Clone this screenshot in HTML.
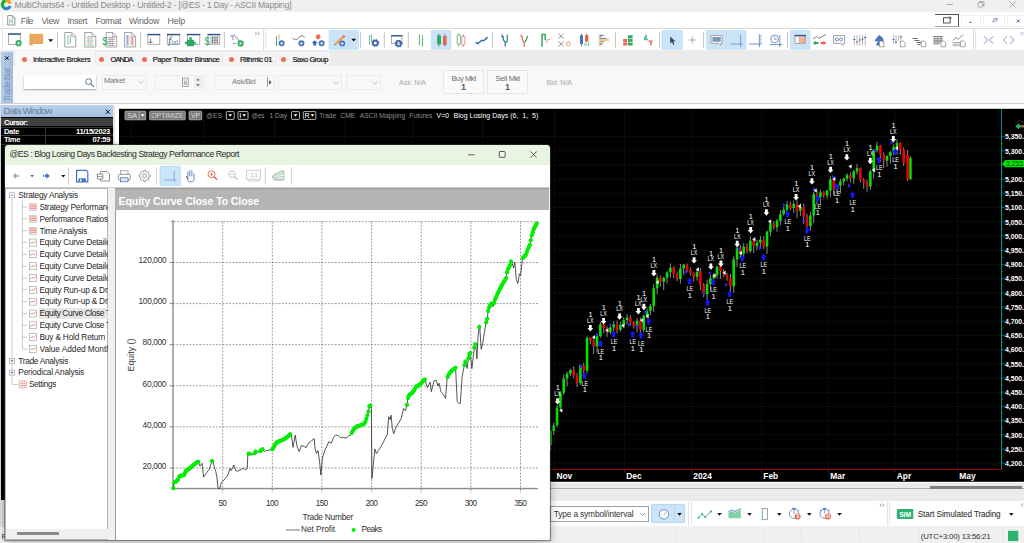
<!DOCTYPE html>
<html><head><meta charset="utf-8"><title>MultiCharts64</title><style>
html,body{margin:0;padding:0;overflow:hidden;}
body{width:1024px;height:543px;overflow:hidden;position:relative;background:#f0f0f0;font-family:"Liberation Sans",sans-serif;}
.a{position:absolute;}
.t{position:absolute;white-space:pre;font-family:"Liberation Sans",sans-serif;}
svg{overflow:hidden;display:block;}
</style></head><body>
<div class="a" style="left:0px;top:105px;width:113px;height:438px;background:#d9d9d9;"></div>
<div class="a" style="left:1px;top:105px;width:112px;height:12.3px;background:linear-gradient(#b8d0ec,#a5c1e3);"></div>
<span class="t" style="left:3.60px;top:105.20px;font-size:9.6px;line-height:12px;color:#6e7f96;letter-spacing:-0.826px;">Data Window</span>
<svg class="a" style="left:103.6px;top:107.7px;" width="8" height="8" viewBox="0 0 8 8"><path d="M1.800 1.800l4 4m0-4l-4 4" stroke="#111" stroke-width="1"/></svg>
<div class="a" style="left:1px;top:117.3px;width:111.6px;height:382.7px;background:#000;"></div>
<div class="a" style="left:1px;top:117.8px;width:111.6px;height:8.7px;background:#404040;"></div>
<span class="t" style="left:4.00px;top:118.20px;font-size:7.6px;line-height:10px;color:#fff;font-weight:bold;letter-spacing:-0.564px;">Cursor:</span>
<div class="a" style="left:1px;top:126.5px;width:111.6px;height:0.5px;background:#333;"></div>
<div class="a" style="left:1px;top:135px;width:111.6px;height:0.5px;background:#333;"></div>
<div class="a" style="left:1px;top:143.7px;width:111.6px;height:0.5px;background:#333;"></div>
<div class="a" style="left:45px;top:126.5px;width:0.6px;height:18px;background:#333;"></div>
<span class="t" style="left:4.00px;top:126.80px;font-size:7.6px;line-height:10px;color:#fff;font-weight:bold;letter-spacing:-0.368px;">Date</span>
<span class="t" style="left:76.00px;top:126.80px;font-size:7.6px;line-height:10px;color:#fff;font-weight:bold;letter-spacing:-0.361px;">11/15/2023</span>
<span class="t" style="left:4.00px;top:135.40px;font-size:7.6px;line-height:10px;color:#fff;font-weight:bold;letter-spacing:-0.400px;">Time</span>
<span class="t" style="left:92.50px;top:135.40px;font-size:7.6px;line-height:10px;color:#fff;font-weight:bold;letter-spacing:-0.387px;">07:59</span>
<div class="a" style="left:113px;top:481.7px;width:911px;height:7px;background:#e9e9e9;"></div>
<div class="a" style="left:113px;top:488.3px;width:911px;height:0.8px;background:#b0b0b0;"></div>
<div class="a" style="left:113px;top:489.1px;width:911px;height:11.7px;background:#ebebeb;"></div>
<div class="a" style="left:0px;top:500.7px;width:1024px;height:25.8px;background:#fdfdfd;"></div>
<div class="a" style="left:0px;top:500.7px;width:4.6px;height:25.8px;background:#dedede;"></div>
<div class="a" style="left:688.5px;top:500.7px;width:336px;height:25.8px;background:#ffffff;"></div>
<div class="a" style="left:0px;top:526.5px;width:1024px;height:16.5px;background:#f0f0f0;"></div>
<div class="a" style="left:930.4px;top:485.9px;width:92px;height:2.8px;background:#808080;"></div>
<svg class="a" style="left:0px;top:501px;" width="6" height="26" viewBox="0 0 6 26"><path d="M2.500 2v22" stroke="#aaa" stroke-width="0.8" stroke-dasharray="0.900 1.100"/></svg>
<div class="a" style="left:550.2px;top:506.4px;width:98.5px;height:15.2px;background:#ffffff;border:0.8px solid #a0a0a0;box-sizing:border-box;"></div>
<span class="t" style="left:553.80px;top:508.70px;font-size:8.4px;line-height:11px;color:#333;letter-spacing:-0.171px;">Type a symbol/interval</span>
<svg class="a" style="left:638px;top:510px;" width="9" height="9" viewBox="0 0 9 9"><path d="M2 3l2.500 2.500 2.500-2.500" fill="none" stroke="#777" stroke-width="0.700"/></svg>
<div class="a" style="left:651px;top:504.3px;width:34px;height:19px;background:#cce4f7;border:0.6px solid #b5d8f5;box-sizing:border-box;border-radius:1px;"></div>
<div class="a" style="left:674.3px;top:504.3px;width:0.6px;height:19px;background:#b5d8f5;"></div>
<svg class="a" style="left:540px;top:500px" width="484" height="43" viewBox="540 500 484 43"><circle cx="663.900" cy="514.300" r="4.700" fill="#fff" stroke="#3c66a8" stroke-width="0.700"/><path d="M663.800 514.500l2.500-2" stroke="#3c66a8" stroke-width="0.600"/><path d="M660.500 514.300h1" stroke="#3c66a8" stroke-width="0.500"/><path d="M677.2 513h4.600l-2.300 2.700z" fill="#111"/><path d="M688.500 501.500v24" stroke="#dcdcdc" stroke-width="0.800"/><path d="M691.300 503v21.500" stroke="#b0b0b0" stroke-width="0.800" stroke-dasharray="0.900 1.100"/><path d="M698.500 517.800l3.700-3.700 3 3 5.800-5.700" fill="none" stroke="#2eaa62" stroke-width="0.900"/><circle cx="698.500" cy="517.800" r="1" fill="#2eaa62"/><circle cx="702.200" cy="514.100" r="1" fill="#2eaa62"/><circle cx="705.200" cy="517.100" r="1" fill="#2eaa62"/><circle cx="711" cy="511.400" r="1" fill="#2eaa62"/><path d="M717.2 513h4.600l-2.300 2.700z" fill="#111"/><path d="M728.500 518.300v-5.500l3.500-1.500 3 1.500 5.800-3v8.500z" fill="#7fd0a3"/><path d="M728.500 511.800l3.500-1.800 3 1.500 5.800-2.800" fill="none" stroke="#3c66a8" stroke-width="0.800"/><path d="M747.2 513h4.600l-2.300 2.700z" fill="#111"/><path d="M762.300 508.600v11" stroke="#2eaa62" stroke-width="0.800"/><path d="M761.500 508.600h6v11h-6" fill="none" stroke="#777" stroke-width="0.700"/><path d="M777.0 513h4.600l-2.300 2.700z" fill="#111"/><circle cx="794" cy="513.800" r="4.600" fill="#fff" stroke="#3c66a8" stroke-width="0.700"/><path d="M794 508.200v5.600" stroke="#3c66a8" stroke-width="0.600"/><path d="M792 508.400h4M797.800 509.600l1.400 1.300" stroke="#3c66a8" stroke-width="0.800"/><circle cx="797.600" cy="516.600" r="3" fill="#e8664d"/><text x="796.300" y="518.400" font-size="4.800" font-weight="bold" fill="#fff" font-family="Liberation Sans">S</text><path d="M807.0 513h4.600l-2.300 2.700z" fill="#111"/><circle cx="824.600" cy="513.800" r="4.600" fill="#fff" stroke="#3c66a8" stroke-width="0.700"/><path d="M824.600 508.200v5.600" stroke="#3c66a8" stroke-width="0.600"/><path d="M821.300 509.600l-1.400 1.300M828.400 509.600l1.400 1.300M822.600 508.400h4" stroke="#3c66a8" stroke-width="0.800"/><circle cx="828" cy="516.600" r="3" fill="#e8664d"/><text x="826.400" y="518.400" font-size="4.800" font-weight="bold" fill="#fff" font-family="Liberation Sans">H</text><path d="M837.2 513h4.600l-2.300 2.700z" fill="#111"/><path d="M879.700 503.500l1.600 1.600-1.600 1.600M882.300 503.500l1.600 1.600-1.600 1.600" fill="none" stroke="#5a5aa8" stroke-width="0.600"/><path d="M887.600 501.500v24" stroke="#dcdcdc" stroke-width="0.800"/><path d="M889.600 503v21.500" stroke="#b0b0b0" stroke-width="0.800" stroke-dasharray="0.900 1.100"/><rect x="896.900" y="508.900" width="16.400" height="10.200" rx="1" fill="#2fb170"/><text x="899.200" y="516.500" font-size="6.400" font-weight="bold" fill="#fff" font-family="Liberation Sans" textLength="11.800" lengthAdjust="spacingAndGlyphs">SIM</text><path d="M1009.0 513h4.600l-2.300 2.700z" fill="#111"/><path d="M1021 503.500l1.600 1.600-1.600 1.600M1023.600 503.500l1.600 1.600-1.600 1.600" fill="none" stroke="#5a5aa8" stroke-width="0.600"/><path d="M675.500 527.500v15M763.500 527.500v15M801.500 527.500v15M859.300 527.500v15M918.700 527.500v15M1002.700 527.500v15" stroke="#e2e2e2" stroke-width="0.800"/><rect x="1008" y="530.800" width="10.300" height="10.300" fill="#2fb170"/></svg>
<span class="t" style="left:917.70px;top:510.10px;font-size:8.2px;line-height:10px;color:#222;letter-spacing:-0.117px;">Start Simulated Trading</span>
<span class="t" style="left:920.80px;top:532.20px;font-size:7.8px;line-height:10px;color:#333;letter-spacing:-0.205px;">(UTC+3:00) 13:56:21</span>
<span class="t" style="left:1.50px;top:531.80px;font-size:8px;line-height:10px;color:#333;">R</span>
<div class="a" style="left:0px;top:0px;width:1024px;height:12px;background:#f0f0f0;"></div>
<svg class="a" style="left:0px;top:0px;" width="13" height="12" viewBox="0 0 13 12"><path d="M4.11 7.88A4.0 4.0 0 0 1 5.84 0.64" fill="none" stroke="#1faa3c" stroke-width="3.2"/><path d="M5.57 0.69A4.0 4.0 0 0 1 10.26 3.56" fill="none" stroke="#f5a21b" stroke-width="3.2"/><path d="M10.16 5.97A4.0 4.0 0 0 1 3.83 7.66" fill="none" stroke="#2f7fd6" stroke-width="3.2"/></svg>
<span class="t" style="left:14.50px;top:-0.40px;font-size:8.6px;line-height:11px;color:#8a8a8a;letter-spacing:-0.246px;">MultiCharts64 - Untitled Desktop - Untitled-2 - [@ES - 1 Day - ASCII Mapping]</span>
<svg class="a" style="left:940px;top:0px;" width="84" height="12" viewBox="0 0 84 12"><path d="M6.5 4.5h6.5" stroke="#9a9a9a" stroke-width="0.8" fill="none"/><rect x="38" y="2.5" width="4.6" height="4.6" rx="0.8" fill="none" stroke="#9a9a9a" stroke-width="0.8"/><path d="M39.5 2.5v-1h4.4v4.4h-1" fill="none" stroke="#9a9a9a" stroke-width="0.8"/><path d="M69.5 1.5l6 6m0-6l-6 6" stroke="#9a9a9a" stroke-width="0.8" fill="none"/></svg>
<div class="a" style="left:0px;top:12px;width:1024px;height:16.3px;background:#ffffff;"></div>
<svg class="a" style="left:0px;top:12px;" width="18" height="16" viewBox="0 0 18 16"><path d="M2.500 1.500v13.500" stroke="#b0b0b0" stroke-width="0.8" stroke-dasharray="0.900 1.100"/><path d="M7.700 3.600h4.600l2.600 2.600v6.800h-7.200z" fill="#fff" stroke="#777" stroke-width="0.8"/><path d="M12.300 3.600v2.600h2.600" fill="none" stroke="#777" stroke-width="0.600"/><path d="M9.600 6.500v5M11 7.500v3.500M12.400 7v4.500" stroke="#4bb37c" stroke-width="0.600"/></svg>
<span class="t" style="left:20.80px;top:15.90px;font-size:8.8px;line-height:11px;color:#666;letter-spacing:-0.495px;">File</span>
<span class="t" style="left:41.50px;top:15.90px;font-size:8.8px;line-height:11px;color:#666;letter-spacing:-0.354px;">View</span>
<span class="t" style="left:67.50px;top:15.90px;font-size:8.8px;line-height:11px;color:#666;letter-spacing:-0.418px;">Insert</span>
<span class="t" style="left:95.50px;top:15.90px;font-size:8.8px;line-height:11px;color:#666;letter-spacing:-0.395px;">Format</span>
<span class="t" style="left:129.00px;top:15.90px;font-size:8.8px;line-height:11px;color:#666;letter-spacing:-0.183px;">Window</span>
<span class="t" style="left:167.50px;top:15.90px;font-size:8.8px;line-height:11px;color:#666;letter-spacing:-0.149px;">Help</span>
<div class="a" style="left:935.4px;top:13.6px;width:23.6px;height:13.2px;background:#fff;border-top:1px solid #555;border-right:1.2px solid #555;border-bottom:1px solid #aaa;box-sizing:border-box;"></div>
<svg class="a" style="left:942px;top:15px;" width="12" height="10" viewBox="0 0 12 10"><rect x="1.5" y="2.8" width="6.6" height="5.2" fill="none" stroke="#444" stroke-width="0.9"/><path d="M6.8 2.2h2v2" fill="none" stroke="#444" stroke-width="0.9"/></svg>
<div class="a" style="left:960.5px;top:14.5px;width:20.5px;height:12px;background:#fff;border:1px solid #f0f0f0;box-sizing:border-box;"></div>
<div class="a" style="left:983px;top:14.5px;width:21.5px;height:12px;background:#fff;border:1px solid #f0f0f0;box-sizing:border-box;"></div>
<div class="a" style="left:1006.5px;top:14.5px;width:20px;height:12px;background:#fff;border:1px solid #f0f0f0;box-sizing:border-box;"></div>
<svg class="a" style="left:960px;top:14px;" width="64" height="13" viewBox="0 0 64 13"><path d="M9 8.3h3" stroke="#4a6fa0" stroke-width="0.9"/><path d="M32.6 7.8l1-2.4h3.2l-1 2.4zM34 5.2l.5-1h3l-.9 2.2" fill="none" stroke="#7a8aa8" stroke-width="0.7"/><path d="M56.7 5.5l3 3m0-3l-3 3" stroke="#4a6fa0" stroke-width="1"/></svg>
<div class="a" style="left:0px;top:28.3px;width:1024px;height:22px;background:#ffffff;border-top:1px solid #d9d9d9;box-sizing:border-box;"></div>
<svg class="a" style="left:0;top:28px" width="1024" height="23" viewBox="0 28 1024 23"><path d="M2.5 30v18.5" stroke="#b0b0b0" stroke-width="0.8" stroke-dasharray="0.9 1.1"/><rect x="8.6" y="33.8" width="11.799999999999999" height="10.600000000000001" fill="#fff" stroke="#9a9a9a" stroke-width="0.8"/><path d="M8.2 34.099999999999994h12.6" stroke="#2a5580" stroke-width="1.4"/><circle cx="18.6" cy="43.2" r="3.1" fill="#2eaa62"/><path d="M16.9 43.2h3.4M18.6 41.5v3.4" stroke="#e6f6ec" stroke-width="0.9"/><path d="M29.4 33.8h13.7v10.2h-10.3v1.6h-3.4z" fill="#eba75e"/><path d="M48.2 39.2h5l-2.5 2.8z" fill="#111"/><path d="M57.5 32v16" stroke="#bfbfbf" stroke-width="0.9"/><path d="M64.8 32.5h7l4 4v10.5h-11z" fill="#fff" stroke="#8a8a8a" stroke-width="0.8"/><path d="M71.8 32.5v4h4" fill="none" stroke="#8a8a8a" stroke-width="0.6"/><path d="M68 35v10M70.3 34.5v9.5" stroke="#2eaa62" stroke-width="0.6"/><path d="M84.8 32.5h7l4 4v10.5h-11z" fill="#fff" stroke="#8a8a8a" stroke-width="0.8"/><path d="M91.8 32.5v4h4" fill="none" stroke="#8a8a8a" stroke-width="0.6"/><path d="M86.5 37h7M86.5 41h7M86.5 45h7" stroke="#2eaa62" stroke-width="0.8" opacity="0.7"/><path d="M86.5 39h7M86.5 43h7" stroke="#e89a7a" stroke-width="0.8" opacity="0.8"/><path d="M88.5 35.5v10M91 36v9.5" stroke="#bbb" stroke-width="0.5"/><path d="M106.2 32.5h6.5l4 4v10.5h-10.5z" fill="#fff" stroke="#8a8a8a" stroke-width="0.8"/><path d="M112.7 32.5v4h4" fill="none" stroke="#8a8a8a" stroke-width="0.6"/><path d="M108 37.5h7M108 39.5h7M108 41.5h7M108 43.5h7M108 45.3h7M110 36.5v9.5M112.3 36.5v9.5" stroke="#888" stroke-width="0.6"/><text x="102.3" y="45" font-size="11" fill="#2eaa62" font-family="Liberation Sans" textLength="5.5" lengthAdjust="spacingAndGlyphs">$</text><path d="M124.6 32.5h7l4 4v10.5h-11z" fill="#fff" stroke="#8a8a8a" stroke-width="0.8"/><path d="M131.6 32.5v4h4" fill="none" stroke="#8a8a8a" stroke-width="0.6"/><rect x="126.3" y="35" width="2.2" height="10.5" fill="#9bb3e0"/><rect x="131.3" y="37" width="2.2" height="8.5" fill="#f0a090"/><path d="M130 35v10.5" stroke="#aaa" stroke-width="0.5"/><path d="M140.5 32v16" stroke="#bfbfbf" stroke-width="0.9"/><rect x="147.9" y="34.3" width="11.900000000000006" height="10.0" fill="#fff" stroke="#9a9a9a" stroke-width="0.8"/><path d="M147.5 34.599999999999994h12.700000000000006" stroke="#2a5580" stroke-width="1.4"/><path d="M147 42.2h7" stroke="#999" stroke-width="0.5"/><path d="M150.6 38.5v4" stroke="#2a5580" stroke-width="0.7"/><circle cx="150.6" cy="42.3" r="0.9" fill="#2a5580"/><rect x="167.3" y="34.3" width="12.5" height="10.0" fill="#fff" stroke="#9a9a9a" stroke-width="0.8"/><path d="M166.9 34.599999999999994h13.3" stroke="#2a5580" stroke-width="1.4"/><text x="168.3" y="43.8" font-size="10.5" font-style="italic" fill="#2a5580" font-family="Liberation Serif">f</text><text x="171.6" y="43.6" font-size="5.6" fill="#2a5580" font-family="Liberation Sans">(x)</text><rect x="187.3" y="34.3" width="12.5" height="10.0" fill="#fff" stroke="#9a9a9a" stroke-width="0.8"/><path d="M186.9 34.599999999999994h13.3" stroke="#2a5580" stroke-width="1.4"/><rect x="187" y="39.800" width="7" height="6.400" fill="#2eaa62"/><circle cx="190.500" cy="38.600" r="1.500" fill="#2eaa62"/><circle cx="186.300" cy="43" r="1.400" fill="#2eaa62"/><circle cx="194.600" cy="43" r="1.300" fill="#2eaa62"/><rect x="208" y="34.3" width="11.800000000000011" height="10.0" fill="#fff" stroke="#9a9a9a" stroke-width="0.8"/><path d="M207.6 34.599999999999994h12.600000000000012" stroke="#2a5580" stroke-width="1.4"/><path d="M210.5 37.3h8M210.5 39h8M210.5 40.7h8M210.5 42.4h8M212.5 36v8M215 36v8M217.3 36v8" stroke="#777" stroke-width="0.7"/><text x="204.6" y="44.6" font-size="10.5" fill="#2eaa62" font-family="Liberation Sans" textLength="5.2" lengthAdjust="spacingAndGlyphs">$</text><path d="M224.4 32v16" stroke="#bfbfbf" stroke-width="0.9"/><path d="M230 36h3v4M233 43.5h3" fill="none" stroke="#3c66a8" stroke-width="0.7"/><path d="M233.5 34.5l6 6.5" stroke="#999" stroke-width="1.6" stroke-dasharray="1.5 0.8"/><circle cx="240.6" cy="43.4" r="3.1" fill="#2eaa62"/><path d="M239.7 41.8l2.4 1.6-2.4 1.6z" fill="#fff"/><path d="M255 31.8l1.7 1.7-1.7 1.7M257.8 31.8l1.7 1.7-1.7 1.7" fill="none" stroke="#5a5aa8" stroke-width="0.6"/><path d="M263.6 29v21.5" stroke="#d0d0d0" stroke-width="0.8"/><path d="M265.8 30v18.5" stroke="#b0b0b0" stroke-width="0.8" stroke-dasharray="0.9 1.1"/><path d="M276.5 36v10" stroke="#2eaa62" stroke-width="0.9"/><path d="M279 34.5v5" stroke="#e8664d" stroke-width="0.7"/><circle cx="281.6" cy="43.3" r="3.0" fill="#4472b4"/><path d="M279.90000000000003 43.3h3.4M281.6 41.599999999999994v3.4" stroke="#dfe8f5" stroke-width="0.9"/><path d="M292.5 37.8c2.2 2.6 4 2.6 6 0s4-2.6 6.2-0.4" fill="none" stroke="#555" stroke-width="0.8"/><circle cx="301.4" cy="43.3" r="3.0" fill="#4472b4"/><path d="M299.7 43.3h3.4M301.4 41.599999999999994v3.4" stroke="#dfe8f5" stroke-width="0.9"/><path d="M316.4 34.5h3.4v2.3h1.6l-3.3 3-3.3-3h1.6z" fill="#e8664d"/><path d="M313.2 45.5v-2.5h-1.4l2.9-2.8 2.9 2.8h-1.4v2.5z" fill="#3c66a8"/><circle cx="321.6" cy="43.3" r="3.0" fill="#4472b4"/><path d="M319.90000000000003 43.3h3.4M321.6 41.599999999999994v3.4" stroke="#dfe8f5" stroke-width="0.9"/><rect x="329" y="30.4" width="29.600000000000023" height="18.8" rx="1" fill="#cce4f7" stroke="#b5d8f5" stroke-width="0.6"/><path d="M348.7 30.4v18.8" stroke="#b5d8f5" stroke-width="0.6"/><path d="M334.2 45.3l1-2.6 7-6.5 1.8 1.8-7.2 6.4z" fill="#eba04a"/><path d="M342.2 36.2l1.5-1.3 1.8 1.7-1.5 1.4z" fill="#e8664d"/><path d="M334.2 45.3l.5-1.3 .9.9z" fill="#333"/><circle cx="342.2" cy="43.6" r="3.0" fill="#4472b4"/><path d="M340.5 43.6h3.4M342.2 41.9v3.4" stroke="#dfe8f5" stroke-width="0.9"/><path d="M351.2 38.8h5l-2.5 2.8z" fill="#111"/><path d="M360.6 32v16" stroke="#bfbfbf" stroke-width="0.9"/><path d="M369.5 35v10M371.5 34v8" stroke="#2eaa62" stroke-width="0.6"/><path d="M368.7 37h1.6M370.7 36h1.6M370.7 40h1.6" stroke="#2eaa62" stroke-width="0.5"/><circle cx="375.3" cy="43" r="2.4" fill="none" stroke="#3c66a8" stroke-width="1.7"/><circle cx="375.3" cy="43" r="3.3" fill="none" stroke="#3c66a8" stroke-width="1.3" stroke-dasharray="1.3 1.3"/><path d="M384.3 32v16" stroke="#bfbfbf" stroke-width="0.9"/><rect x="391.4" y="35.5" width="10.600000000000023" height="8.100000000000001" fill="#fff" stroke="#9a9a9a" stroke-width="0.8"/><path d="M391.0 35.8h11.400000000000023" stroke="#2a5580" stroke-width="1.4"/><circle cx="398.6" cy="43.6" r="2.4" fill="none" stroke="#3c66a8" stroke-width="1.7"/><circle cx="398.6" cy="43.6" r="3.3" fill="none" stroke="#3c66a8" stroke-width="1.3" stroke-dasharray="1.3 1.3"/><path d="M408.3 32v16" stroke="#bfbfbf" stroke-width="0.9"/><path d="M419.5 34v11.5M422.5 35v12" stroke="#2eaa62" stroke-width="0.7"/><path d="M418.6 37h1.8M418.6 42h1.8M421.6 39h1.8M421.6 44h1.8" stroke="#2eaa62" stroke-width="0.5"/><rect x="431.3" y="30.4" width="19.69999999999999" height="18.8" rx="1" fill="#cce4f7" stroke="#b5d8f5" stroke-width="0.6"/><path d="M439 33.6v13M444.8 33.6v13" stroke="#666" stroke-width="0.7"/><rect x="437.1" y="35.2" width="3.9" height="9.3" rx="0.5" fill="#2eaa62"/><rect x="443" y="36" width="3.7" height="9" rx="0.5" fill="#e8664d"/><path d="M458.8 33.6v1.6M458.8 44v2.6M463.3 34.5v2M463.3 45v1.6" stroke="#666" stroke-width="0.7"/><rect x="457.2" y="35.2" width="3.3" height="8.8" rx="0.4" fill="#fff" stroke="#2eaa62" stroke-width="0.7"/><rect x="461.8" y="36.5" width="3.1" height="8.5" rx="0.4" fill="#fff" stroke="#e8664d" stroke-width="0.7"/><path d="M475.6 42.4l2.3 1.3 3.6-3.2 2.6 0 3.4-3.4" fill="none" stroke="#3c66a8" stroke-width="1.5" stroke-linejoin="round"/><path d="M492.3 32v16" stroke="#bfbfbf" stroke-width="0.9"/><path d="M502 34.4v2.3h1.2v3l2 2.3v4.6" fill="none" stroke="#3c66a8" stroke-width="1.2"/><path d="M507.3 34.6v6.6l-1.6 1.6" fill="none" stroke="#2eaa62" stroke-width="1.3"/><path d="M521.2 34.4v2.3l1.2 .5v2.6l1.8 3v4" fill="none" stroke="#e8664d" stroke-width="1.2"/><path d="M527.6 36l-1.2 3.6-1.8 3" fill="none" stroke="#2eaa62" stroke-width="1.3"/><path d="M542 46.8v-12.2h3.2v5.6" fill="none" stroke="#2eaa62" stroke-width="1.5"/><path d="M545.6 42.2h1.5v-2.6h3" fill="none" stroke="#e8664d" stroke-width="0.6"/><path d="M558.500 33.800l5.200 4.800m0-4.800l-5.200 4.800M558.500 41.400l5.200 5m0-5l-5.200 5" stroke="#666" stroke-width="0.7"/><circle cx="568.3" cy="43.7" r="1.9" fill="none" stroke="#e8664d" stroke-width="0.7"/><path d="M581.5 33.6v13M586.6 33.6v9" stroke="#666" stroke-width="0.7"/><rect x="580" y="35" width="3" height="9" rx="0.4" fill="#4472c4"/><rect x="585" y="35" width="3.4" height="6.6" rx="0.4" fill="#e8664d"/><path d="M585 42.3v4.3M588.5 42.3v4.3M585 44.5h3.5" stroke="#52c48a" stroke-width="0.7"/><path d="M599.3 34.5v12" stroke="#aaa" stroke-width="0.5"/><path d="M599.6 35.3h4" stroke="#3c66a8" stroke-width="1"/><path d="M599.6 36.9h2" stroke="#e8664d" stroke-width="1"/><path d="M599.6 38.4h7" stroke="#3c66a8" stroke-width="1" opacity="0.8"/><path d="M599.6 40h9.4" stroke="#eba04a" stroke-width="1.2"/><path d="M599.6 41.6h5" stroke="#e8664d" stroke-width="1" opacity="0.8"/><path d="M599.6 43.2h3.4" stroke="#2eaa62" stroke-width="1"/><path d="M599.6 44.8h2.5" stroke="#e8664d" stroke-width="1"/><path d="M615.4 32v16" stroke="#bfbfbf" stroke-width="0.9"/><rect x="623.2" y="39" width="4" height="3" fill="#e8664d"/><rect x="623.2" y="42.5" width="4" height="3" fill="#e8664d"/><rect x="628" y="35.2" width="4.6" height="3" fill="#2eaa62"/><rect x="628" y="38.8" width="4.6" height="3" fill="#2eaa62"/><rect x="628" y="42.5" width="4.6" height="3" fill="#2eaa62"/><path d="M644 39.6v-2.5h1v-2.4h1.8v4h1.2v1.6h-4z" fill="#52c48a"/><path d="M648.5 40.2h4v1.8l-1.3 3.6h-1.2v-3.4h-1.5z" fill="#e88878"/><path d="M659.6 32v16" stroke="#bfbfbf" stroke-width="0.9"/><rect x="662" y="30.4" width="20.399999999999977" height="18.8" rx="1" fill="#cce4f7" stroke="#b5d8f5" stroke-width="0.6"/><path d="M670.2 36.4v7.4l1.8-1.7 1.3 2.8 1.2-.6-1.3-2.7h2.4z" fill="#2c4a66"/><path d="M688.8 40h7M692.3 36.5v7" stroke="#a8a8a8" stroke-width="0.9"/><path d="M703.4 32v16" stroke="#bfbfbf" stroke-width="0.9"/><rect x="706.3" y="30.4" width="39.700000000000045" height="18.8" rx="1" fill="#cce4f7" stroke="#b5d8f5" stroke-width="0.6"/><path d="M726.4 30.4v18.8" stroke="#b5d8f5" stroke-width="0.6"/><path d="M711 35.6h11.2v7.8h-1.4v2l-2.4-2h-7.4z" fill="#fff" stroke="#8a8a8a" stroke-width="0.8"/><rect x="712.4" y="37" width="8.4" height="4.8" fill="#7d98b3"/><path d="M730.5 44h12.6M740.6 34.2v13" stroke="#5580c8" stroke-width="0.7"/><path d="M749.3 44h12.6M759.4 34.2v13" stroke="#3c66a8" stroke-width="0.7"/><path d="M760 35h1.6M760 36.5h1.6M760 38h1.6M760 39.5h1.6M760 41h1.6M760 42.5h1.6" stroke="#3c66a8" stroke-width="0.4"/><circle cx="774.6" cy="39" r="3.9" fill="none" stroke="#3c66a8" stroke-width="0.7"/><path d="M774.6 36.5v2.8h2.2" fill="none" stroke="#3c66a8" stroke-width="0.6"/><path d="M769.8 44.6h12.4M779.8 35v12.3" stroke="#3c66a8" stroke-width="0.7"/><path d="M787.6 32v16" stroke="#bfbfbf" stroke-width="0.9"/><rect x="790.3" y="30.4" width="19.700000000000045" height="18.8" rx="1" fill="#cce4f7" stroke="#b5d8f5" stroke-width="0.6"/><rect x="795" y="35.3" width="10.6" height="8.3" fill="#fff" stroke="#888" stroke-width="0.7"/><rect x="799" y="36.6" width="6" height="6.6" fill="#f4a99b"/><path d="M797 36v7.3M798.6 36v7.3M801 36.6v6.6" stroke="#ddd" stroke-width="0.5"/><path d="M794.6 35.6h11.4" stroke="#2a5580" stroke-width="1.4"/><path d="M813 39l3.6-2.6 2.4 2 7-4" fill="none" stroke="#444" stroke-width="0.7"/><path d="M812.8 43l3-2.2v1.3h2.8v1.8h-2.8v1.3z" fill="#2eaa62"/><path d="M826.4 43l-3-2.2v1.3h-2.8v1.8h2.8v1.3z" fill="#e8664d"/><path d="M833.6 35.6h11v7.8h-1.4v2l-2.4-2h-7.2z" fill="#fff" stroke="#8a8a8a" stroke-width="0.8"/><path d="M839 39.5c-1.4-2-3.6-1.8-3.6 0s2.2 2 3.600 0s3.600-1.800 3.600 0s-2.200 2-3.600 0z" fill="none" stroke="#3c66a8" stroke-width="0.8"/><path d="M854.3 35v10.6" stroke="#8a8a8a" stroke-width="0.6"/><path d="M853.3 39.5h2" stroke="#3c66a8" stroke-width="1.1"/><path d="M857 35v10.6" stroke="#8a8a8a" stroke-width="0.6"/><path d="M856 42h2" stroke="#3c66a8" stroke-width="1.1"/><path d="M859.7 35v10.6" stroke="#8a8a8a" stroke-width="0.6"/><path d="M858.7 40h2" stroke="#3c66a8" stroke-width="1.1"/><path d="M862.5 35v10.6" stroke="#8a8a8a" stroke-width="0.6"/><path d="M861.5 39h2" stroke="#3c66a8" stroke-width="1.1"/><path d="M865.2 35v10.6" stroke="#8a8a8a" stroke-width="0.6"/><path d="M864.2 37.5h2" stroke="#3c66a8" stroke-width="1.1"/><path d="M876 45.600C876.200 43.800 877.800 42.600 877.600 40.800L875.700 41.700L874.800 40.200L878 36.300L879 34.700L879.700 35.800C882.400 36.400 883.800 38.800 883.600 42L883.600 45.600Z" fill="#4a78c0"/><path d="M879.4 41.0h2.800l1.900 1.900v3.900h-4.700z" fill="#fff" stroke="#777" stroke-width="0.650"/><path d="M893.6 35v9M896 35v9M898.6 35v6M901 35v5" stroke="#8a8a8a" stroke-width="0.6"/><path d="M892.6 39.500h2M895 42h2M900 37h2" stroke="#3c66a8" stroke-width="1"/><path d="M900.4 41.0h2.800l1.900 1.900v3.900h-4.700z" fill="#fff" stroke="#777" stroke-width="0.650"/><path d="M912.5 38.5h5M914.5 40.500h5M916.5 42.500h5M917.5 44.500h3" stroke="#666" stroke-width="1"/><path d="M921.2 41.0h2.800l1.900 1.900v3.900h-4.700z" fill="#fff" stroke="#777" stroke-width="0.650"/><path d="M933.5 36.500h9M933.5 38.300h9M933.5 40.100h9M933.5 41.900h9M933.5 43.700h6" stroke="#666" stroke-width="1.1"/><path d="M936 36v8.500M939.200 36v8.500" stroke="#fff" stroke-width="0.5"/><path d="M941 41.0h2.800l1.900 1.900v3.900h-4.700z" fill="#fff" stroke="#777" stroke-width="0.650"/><path d="M952.5 40.500l3.500-3 2.300 1.800 5-4.800" fill="none" stroke="#666" stroke-width="0.7"/><path d="M952.500 42.500h8M952.500 44.200h8M952.500 45.800h8" stroke="#999" stroke-width="0.8"/><path d="M960.6 41.0h2.800l1.900 1.900v3.900h-4.700z" fill="#fff" stroke="#777" stroke-width="0.650"/><path d="M973.5 29v21.500" stroke="#d0d0d0" stroke-width="0.8"/><path d="M975.600 30v18.500" stroke="#b0b0b0" stroke-width="0.8" stroke-dasharray="0.9 1.1"/><path d="M984 36.200l3.800 3.800-3.800 3.800M993.300 36.200l-3.800 3.800 3.800 3.800" fill="none" stroke="#5a7fb5" stroke-width="0.8"/><path d="M1007.200 36.200l-3.800 3.800 3.800 3.800M1010 36.200l3.800 3.800-3.800 3.800" fill="none" stroke="#5a7fb5" stroke-width="0.8"/><path d="M1020.500 31.800l1.700 1.700-1.700 1.700M1023.300 31.800l1.700 1.700-1.700 1.700" fill="none" stroke="#5a5aa8" stroke-width="0.6"/></svg>
<div class="a" style="left:0px;top:50.3px;width:1024px;height:16px;background:#ebebeb;"></div>
<div class="a" style="left:0px;top:66px;width:1024px;height:37.2px;background:#f8f8f8;"></div>
<div class="a" style="left:0px;top:103.2px;width:1024px;height:1px;background:#d0d0d0;"></div>
<div class="a" style="left:0px;top:104.2px;width:1024px;height:1.2px;background:#fdfdfd;"></div>
<div class="a" style="left:1px;top:51.9px;width:12.3px;height:50.9px;background:linear-gradient(90deg,#b6cce8,#a3bcdc);"></div>
<svg class="a" style="left:0px;top:52px;" width="13" height="52" viewBox="0 0 13 52"><path d="M5 4.400l3.600 3.600m0-3.600l-3.600 3.600" stroke="#111" stroke-width="1"/></svg>
<span class="t" style="left:-13.2px;top:78.500px;width:40px;height:12px;line-height:12px;font-size:9.8px;color:#7f96b8;transform:rotate(-90deg);transform-origin:center;text-align:center;letter-spacing:-1.013px;">Trade Bar</span>
<div class="a" style="left:14.5px;top:51.2px;width:80.5px;height:15px;background:#f8f8f8;"></div>
<div class="a" style="left:95.6px;top:51.5px;width:39.80000000000001px;height:14.5px;background:#f3f3f3;"></div>
<div class="a" style="left:136.4px;top:51.5px;width:85.9px;height:14.5px;background:#f3f3f3;"></div>
<div class="a" style="left:223.3px;top:51.5px;width:52.0px;height:14.5px;background:#f3f3f3;"></div>
<div class="a" style="left:276.3px;top:51.5px;width:53.5px;height:14.5px;background:#f3f3f3;"></div>
<div class="a" style="left:21.5px;top:56.7px;width:5.2px;height:5.2px;border-radius:50%;background:#e8705a;"></div>
<span class="t" style="left:33.00px;top:55.00px;font-size:7.6px;line-height:10px;color:#111;letter-spacing:-0.308px;-webkit-text-stroke:0.18px #111;">Interactive Brokers</span>
<div class="a" style="left:99.0px;top:56.7px;width:5.2px;height:5.2px;border-radius:50%;background:#e8705a;"></div>
<span class="t" style="left:110.50px;top:55.00px;font-size:7.6px;line-height:10px;color:#111;letter-spacing:-1.006px;-webkit-text-stroke:0.18px #111;">OANDA</span>
<div class="a" style="left:141.5px;top:56.7px;width:5.2px;height:5.2px;border-radius:50%;background:#e8705a;"></div>
<span class="t" style="left:152.80px;top:55.00px;font-size:7.6px;line-height:10px;color:#111;letter-spacing:-0.361px;-webkit-text-stroke:0.18px #111;">Paper Trader Binance</span>
<div class="a" style="left:228.5px;top:56.7px;width:5.2px;height:5.2px;border-radius:50%;background:#e8705a;"></div>
<span class="t" style="left:240.00px;top:55.00px;font-size:7.6px;line-height:10px;color:#111;letter-spacing:-0.390px;-webkit-text-stroke:0.18px #111;">Rithmic 01</span>
<div class="a" style="left:281.0px;top:56.7px;width:5.2px;height:5.2px;border-radius:50%;background:#e8705a;"></div>
<span class="t" style="left:292.50px;top:55.00px;font-size:7.6px;line-height:10px;color:#111;letter-spacing:-0.505px;-webkit-text-stroke:0.18px #111;">Saxo Group</span>
<div class="a" style="left:23.6px;top:74.8px;width:72.7px;height:14.2px;background:#ffffff;box-shadow:0 1px 1.5px rgba(0,0,0,0.35);"></div>
<svg class="a" style="left:84px;top:76.5px;" width="12" height="12" viewBox="0 0 12 12"><circle cx="4.6" cy="4.6" r="2.9" fill="none" stroke="#44648c" stroke-width="0.9"/><path d="M6.8 6.8l3 3" stroke="#44648c" stroke-width="1.1"/></svg>
<div class="a" style="left:102px;top:74.5px;width:44.5px;height:15px;background:#f8f8f8;border:1px solid #ececec;box-sizing:border-box;"></div>
<span class="t" style="left:104.00px;top:75.60px;font-size:7.6px;line-height:10px;color:#7a7a7a;letter-spacing:-0.404px;">Market</span>
<svg class="a" style="left:137px;top:78px;" width="8" height="8" viewBox="0 0 8 8"><path d="M1.5 2.8l2.5 2.5 2.5-2.5" fill="none" stroke="#aaa" stroke-width="0.7"/></svg>
<div class="a" style="left:154.5px;top:74.5px;width:50.5px;height:15px;background:#f8f8f8;border:1px solid #ececec;box-sizing:border-box;"></div>
<div class="a" style="left:180.5px;top:75.5px;width:9.5px;height:13px;background:#ffffff;"></div>
<svg class="a" style="left:181px;top:76.5px;" width="9" height="11" viewBox="0 0 9 11"><rect x="1.6" y="1" width="5.6" height="8.4" fill="none" stroke="#777" stroke-width="0.7"/><path d="M2.6 3h3.6M2.6 5h3.6M2.6 7h3.6M3.8 4v4M5.2 4v4" stroke="#777" stroke-width="0.5"/></svg>
<div class="a" style="left:193.7px;top:75.4px;width:9.3px;height:13.1px;background:#eeeeee;"></div>
<svg class="a" style="left:194px;top:75.7px;" width="8" height="13" viewBox="0 0 8 13"><path d="M2.2 4.4l1.8-2 1.8 2z" fill="#666"/><path d="M2.2 8.3l1.8 2 1.8-2z" fill="#666"/></svg>
<div class="a" style="left:213.7px;top:74.5px;width:61px;height:15px;background:#f8f8f8;border:1px solid #ececec;box-sizing:border-box;"></div>
<span class="t" style="left:232.10px;top:77.20px;font-size:7.6px;line-height:10px;color:#7a7a7a;letter-spacing:-0.366px;">Ask/Bid</span>
<div class="a" style="left:266.8px;top:76.8px;width:0.8px;height:10.5px;background:#999;"></div>
<svg class="a" style="left:268px;top:78.6px;" width="5" height="7" viewBox="0 0 5 7"><path d="M1 1l2.6 2.4L1 5.8z" fill="#555"/></svg>
<div class="a" style="left:278px;top:74.5px;width:63.5px;height:15px;background:#f8f8f8;border:1px solid #ececec;box-sizing:border-box;"></div>
<svg class="a" style="left:332px;top:78.5px;" width="8" height="8" viewBox="0 0 8 8"><path d="M1.5 2.8l2.5 2.5 2.5-2.5" fill="none" stroke="#aaa" stroke-width="0.7"/></svg>
<div class="a" style="left:346px;top:74.5px;width:34.5px;height:15px;background:#f8f8f8;border:1px solid #ececec;box-sizing:border-box;"></div>
<svg class="a" style="left:371px;top:78.5px;" width="8" height="8" viewBox="0 0 8 8"><path d="M1.5 2.8l2.5 2.5 2.5-2.5" fill="none" stroke="#aaa" stroke-width="0.7"/></svg>
<span class="t" style="left:399.00px;top:77.80px;font-size:7.2px;line-height:9px;color:#aaa;letter-spacing:-0.126px;">Ask: N/A</span>
<div class="a" style="left:443.4px;top:70.2px;width:40.4px;height:23.4px;background:#fafafa;border:1px solid #e6e6e6;box-sizing:border-box;"></div>
<span class="t" style="left:451.45px;top:73.80px;font-size:7.6px;line-height:10px;color:#6a6a6a;letter-spacing:-0.421px;">Buy Mkt</span>
<span class="t" style="left:461.00px;top:82.30px;font-size:9px;line-height:11px;color:#606060;font-weight:bold;">1</span>
<div class="a" style="left:487.4px;top:70.2px;width:40.4px;height:23.4px;background:#fafafa;border:1px solid #e6e6e6;box-sizing:border-box;"></div>
<span class="t" style="left:495.45px;top:73.80px;font-size:7.6px;line-height:10px;color:#6a6a6a;letter-spacing:-0.316px;">Sell Mkt</span>
<span class="t" style="left:505.00px;top:82.30px;font-size:9px;line-height:11px;color:#606060;font-weight:bold;">1</span>
<span class="t" style="left:546.50px;top:77.80px;font-size:7.2px;line-height:9px;color:#aaa;letter-spacing:-0.114px;">Bid: N/A</span>
<div class="a" style="left:114.8px;top:104.6px;width:910px;height:378px;background:#ffffff;"></div>
<div class="a" style="left:113px;top:105px;width:1.8px;height:377px;background:#e6e6e6;"></div>
<svg class="a" style="left:0;top:104px" width="1024" height="380" viewBox="0 104 1024 380" xml:space="preserve"><style>.mk{font:7.400px "Liberation Sans",sans-serif;fill:#fff;text-anchor:middle}.pl{font:bold 7.4px "Liberation Sans",sans-serif;fill:#fff}.ml{font:bold 8.400px "Liberation Sans",sans-serif;fill:#fff}.st{font:7.300px "Liberation Sans",sans-serif;white-space:pre}</style><rect x="119" y="108.8" width="906" height="373" fill="#000"/><path d="M119 463.2H1002" stroke="#3c3c3c" stroke-width="0.5" stroke-dasharray="0.6 1.0"/><path d="M1002 463.2h2.5" stroke="#00a0a0" stroke-width="0.7"/><path d="M119 449.0H1002" stroke="#3c3c3c" stroke-width="0.5" stroke-dasharray="0.6 1.0"/><path d="M1002 449.0h2.5" stroke="#00a0a0" stroke-width="0.7"/><path d="M119 434.8H1002" stroke="#3c3c3c" stroke-width="0.5" stroke-dasharray="0.6 1.0"/><path d="M1002 434.8h2.5" stroke="#00a0a0" stroke-width="0.7"/><path d="M119 420.6H1002" stroke="#3c3c3c" stroke-width="0.5" stroke-dasharray="0.6 1.0"/><path d="M1002 420.6h2.5" stroke="#00a0a0" stroke-width="0.7"/><path d="M119 406.4H1002" stroke="#3c3c3c" stroke-width="0.5" stroke-dasharray="0.6 1.0"/><path d="M1002 406.4h2.5" stroke="#00a0a0" stroke-width="0.7"/><path d="M119 392.2H1002" stroke="#3c3c3c" stroke-width="0.5" stroke-dasharray="0.6 1.0"/><path d="M1002 392.2h2.5" stroke="#00a0a0" stroke-width="0.7"/><path d="M119 378.0H1002" stroke="#3c3c3c" stroke-width="0.5" stroke-dasharray="0.6 1.0"/><path d="M1002 378.0h2.5" stroke="#00a0a0" stroke-width="0.7"/><path d="M119 363.8H1002" stroke="#3c3c3c" stroke-width="0.5" stroke-dasharray="0.6 1.0"/><path d="M1002 363.8h2.5" stroke="#00a0a0" stroke-width="0.7"/><path d="M119 349.6H1002" stroke="#3c3c3c" stroke-width="0.5" stroke-dasharray="0.6 1.0"/><path d="M1002 349.6h2.5" stroke="#00a0a0" stroke-width="0.7"/><path d="M119 335.4H1002" stroke="#3c3c3c" stroke-width="0.5" stroke-dasharray="0.6 1.0"/><path d="M1002 335.4h2.5" stroke="#00a0a0" stroke-width="0.7"/><path d="M119 321.2H1002" stroke="#3c3c3c" stroke-width="0.5" stroke-dasharray="0.6 1.0"/><path d="M1002 321.2h2.5" stroke="#00a0a0" stroke-width="0.7"/><path d="M119 307.0H1002" stroke="#3c3c3c" stroke-width="0.5" stroke-dasharray="0.6 1.0"/><path d="M1002 307.0h2.5" stroke="#00a0a0" stroke-width="0.7"/><path d="M119 292.8H1002" stroke="#3c3c3c" stroke-width="0.5" stroke-dasharray="0.6 1.0"/><path d="M1002 292.8h2.5" stroke="#00a0a0" stroke-width="0.7"/><path d="M119 278.6H1002" stroke="#3c3c3c" stroke-width="0.5" stroke-dasharray="0.6 1.0"/><path d="M1002 278.6h2.5" stroke="#00a0a0" stroke-width="0.7"/><path d="M119 264.4H1002" stroke="#3c3c3c" stroke-width="0.5" stroke-dasharray="0.6 1.0"/><path d="M1002 264.4h2.5" stroke="#00a0a0" stroke-width="0.7"/><path d="M119 250.2H1002" stroke="#3c3c3c" stroke-width="0.5" stroke-dasharray="0.6 1.0"/><path d="M1002 250.2h2.5" stroke="#00a0a0" stroke-width="0.7"/><path d="M119 236.0H1002" stroke="#3c3c3c" stroke-width="0.5" stroke-dasharray="0.6 1.0"/><path d="M1002 236.0h2.5" stroke="#00a0a0" stroke-width="0.7"/><path d="M119 221.8H1002" stroke="#3c3c3c" stroke-width="0.5" stroke-dasharray="0.6 1.0"/><path d="M1002 221.8h2.5" stroke="#00a0a0" stroke-width="0.7"/><path d="M119 207.6H1002" stroke="#3c3c3c" stroke-width="0.5" stroke-dasharray="0.6 1.0"/><path d="M1002 207.6h2.5" stroke="#00a0a0" stroke-width="0.7"/><path d="M119 193.4H1002" stroke="#3c3c3c" stroke-width="0.5" stroke-dasharray="0.6 1.0"/><path d="M1002 193.4h2.5" stroke="#00a0a0" stroke-width="0.7"/><path d="M119 179.2H1002" stroke="#3c3c3c" stroke-width="0.5" stroke-dasharray="0.6 1.0"/><path d="M1002 179.2h2.5" stroke="#00a0a0" stroke-width="0.7"/><path d="M119 165.0H1002" stroke="#3c3c3c" stroke-width="0.5" stroke-dasharray="0.6 1.0"/><path d="M1002 165.0h2.5" stroke="#00a0a0" stroke-width="0.7"/><path d="M119 150.8H1002" stroke="#3c3c3c" stroke-width="0.5" stroke-dasharray="0.6 1.0"/><path d="M1002 150.8h2.5" stroke="#00a0a0" stroke-width="0.7"/><path d="M119 136.6H1002" stroke="#3c3c3c" stroke-width="0.5" stroke-dasharray="0.6 1.0"/><path d="M1002 136.6h2.5" stroke="#00a0a0" stroke-width="0.7"/><path d="M1002 456.1h1.3" stroke="#00a0a0" stroke-width="0.5"/><path d="M1002 441.9h1.3" stroke="#00a0a0" stroke-width="0.5"/><path d="M1002 427.7h1.3" stroke="#00a0a0" stroke-width="0.5"/><path d="M1002 413.5h1.3" stroke="#00a0a0" stroke-width="0.5"/><path d="M1002 399.3h1.3" stroke="#00a0a0" stroke-width="0.5"/><path d="M1002 385.1h1.3" stroke="#00a0a0" stroke-width="0.5"/><path d="M1002 370.9h1.3" stroke="#00a0a0" stroke-width="0.5"/><path d="M1002 356.7h1.3" stroke="#00a0a0" stroke-width="0.5"/><path d="M1002 342.5h1.3" stroke="#00a0a0" stroke-width="0.5"/><path d="M1002 328.3h1.3" stroke="#00a0a0" stroke-width="0.5"/><path d="M1002 314.1h1.3" stroke="#00a0a0" stroke-width="0.5"/><path d="M1002 299.9h1.3" stroke="#00a0a0" stroke-width="0.5"/><path d="M1002 285.7h1.3" stroke="#00a0a0" stroke-width="0.5"/><path d="M1002 271.5h1.3" stroke="#00a0a0" stroke-width="0.5"/><path d="M1002 257.3h1.3" stroke="#00a0a0" stroke-width="0.5"/><path d="M1002 243.1h1.3" stroke="#00a0a0" stroke-width="0.5"/><path d="M1002 228.9h1.3" stroke="#00a0a0" stroke-width="0.5"/><path d="M1002 214.7h1.3" stroke="#00a0a0" stroke-width="0.5"/><path d="M1002 200.5h1.3" stroke="#00a0a0" stroke-width="0.5"/><path d="M1002 186.3h1.3" stroke="#00a0a0" stroke-width="0.5"/><path d="M1002 172.1h1.3" stroke="#00a0a0" stroke-width="0.5"/><path d="M1002 157.9h1.3" stroke="#00a0a0" stroke-width="0.5"/><path d="M1002 143.7h1.3" stroke="#00a0a0" stroke-width="0.5"/><path d="M554.6 109V469" stroke="#3c3c3c" stroke-width="0.5" stroke-dasharray="0.6 1.0"/><path d="M554.6 469.5v3" stroke="#a00000" stroke-width="0.8"/><path d="M624.5 109V469" stroke="#3c3c3c" stroke-width="0.5" stroke-dasharray="0.6 1.0"/><path d="M624.5 469.5v3" stroke="#a00000" stroke-width="0.8"/><path d="M691.5 109V469" stroke="#3c3c3c" stroke-width="0.5" stroke-dasharray="0.6 1.0"/><path d="M691.5 469.5v3" stroke="#a00000" stroke-width="0.8"/><path d="M761.5 109V469" stroke="#3c3c3c" stroke-width="0.5" stroke-dasharray="0.6 1.0"/><path d="M761.5 469.5v3" stroke="#a00000" stroke-width="0.8"/><path d="M828.5 109V469" stroke="#3c3c3c" stroke-width="0.5" stroke-dasharray="0.6 1.0"/><path d="M828.5 469.5v3" stroke="#a00000" stroke-width="0.8"/><path d="M895 109V469" stroke="#3c3c3c" stroke-width="0.5" stroke-dasharray="0.6 1.0"/><path d="M895 469.5v3" stroke="#a00000" stroke-width="0.8"/><path d="M957.5 109V469" stroke="#3c3c3c" stroke-width="0.5" stroke-dasharray="0.6 1.0"/><path d="M957.5 469.5v3" stroke="#a00000" stroke-width="0.8"/><path d="M131.2 109V469" stroke="#3c3c3c" stroke-width="0.5" stroke-dasharray="0.6 1.0"/><path d="M131.2 469.5v3" stroke="#a00000" stroke-width="0.8"/><path d="M203.5 109V469" stroke="#3c3c3c" stroke-width="0.5" stroke-dasharray="0.6 1.0"/><path d="M203.5 469.5v3" stroke="#a00000" stroke-width="0.8"/><path d="M274.6 109V469" stroke="#3c3c3c" stroke-width="0.5" stroke-dasharray="0.6 1.0"/><path d="M274.6 469.5v3" stroke="#a00000" stroke-width="0.8"/><path d="M345 109V469" stroke="#3c3c3c" stroke-width="0.5" stroke-dasharray="0.6 1.0"/><path d="M345 469.5v3" stroke="#a00000" stroke-width="0.8"/><path d="M413 109V469" stroke="#3c3c3c" stroke-width="0.5" stroke-dasharray="0.6 1.0"/><path d="M413 469.5v3" stroke="#a00000" stroke-width="0.8"/><path d="M482.7 109V469" stroke="#3c3c3c" stroke-width="0.5" stroke-dasharray="0.6 1.0"/><path d="M482.7 469.5v3" stroke="#a00000" stroke-width="0.8"/><path d="M1001.500 109V470" stroke="#00a0a0" stroke-width="0.9"/><path d="M119 469.5H1002" stroke="#a00000" stroke-width="0.9"/><path d="M550.4 429.8V450.7" stroke="#9a9a9a" stroke-width="0.9"/><rect x="549.10" y="430.9" width="2.6" height="14.1" fill="#00e400"/><path d="M553.7 422.6V434.8" stroke="#9a9a9a" stroke-width="0.9"/><rect x="552.43" y="425.3" width="2.6" height="5.7" fill="#00e400"/><path d="M557.1 405.0V427.0" stroke="#9a9a9a" stroke-width="0.9"/><rect x="555.77" y="407.5" width="2.6" height="17.7" fill="#00e400"/><path d="M560.4 391.8V409.6" stroke="#9a9a9a" stroke-width="0.9"/><rect x="559.10" y="392.6" width="2.6" height="14.9" fill="#00e400"/><path d="M563.7 374.7V394.9" stroke="#9a9a9a" stroke-width="0.9"/><rect x="562.43" y="378.6" width="2.6" height="14.1" fill="#00e400"/><path d="M567.1 371.7V386.4" stroke="#9a9a9a" stroke-width="0.9"/><rect x="565.76" y="373.8" width="2.6" height="4.7" fill="#00e400"/><path d="M570.4 368.9V376.1" stroke="#9a9a9a" stroke-width="0.9"/><rect x="569.10" y="370.0" width="2.6" height="3.9" fill="#00e400"/><path d="M573.7 366.2V378.5" stroke="#9a9a9a" stroke-width="0.9"/><rect x="572.43" y="370.0" width="2.6" height="5.9" fill="#f00000"/><path d="M577.1 372.8V386.9" stroke="#9a9a9a" stroke-width="0.9"/><rect x="575.76" y="375.9" width="2.6" height="7.1" fill="#f00000"/><path d="M580.4 364.6V384.8" stroke="#9a9a9a" stroke-width="0.9"/><rect x="579.10" y="365.3" width="2.6" height="17.7" fill="#00e400"/><path d="M583.7 362.9V378.1" stroke="#9a9a9a" stroke-width="0.9"/><rect x="582.43" y="365.3" width="2.6" height="5.3" fill="#f00000"/><path d="M587.1 336.3V373.3" stroke="#9a9a9a" stroke-width="0.9"/><rect x="585.76" y="337.8" width="2.6" height="32.9" fill="#00e400"/><path d="M590.4 337.0V344.4" stroke="#9a9a9a" stroke-width="0.9"/><rect x="589.10" y="337.8" width="2.6" height="3.2" fill="#f00000"/><path d="M593.7 339.3V354.0" stroke="#9a9a9a" stroke-width="0.9"/><rect x="592.43" y="341.0" width="2.6" height="5.2" fill="#f00000"/><path d="M597.1 333.9V352.6" stroke="#9a9a9a" stroke-width="0.9"/><rect x="595.76" y="336.1" width="2.6" height="10.1" fill="#00e400"/><path d="M600.4 321.9V337.8" stroke="#9a9a9a" stroke-width="0.9"/><rect x="599.09" y="324.4" width="2.6" height="11.7" fill="#00e400"/><path d="M603.7 320.8V333.3" stroke="#9a9a9a" stroke-width="0.9"/><rect x="602.43" y="324.4" width="2.6" height="3.8" fill="#f00000"/><path d="M607.1 326.2V336.9" stroke="#9a9a9a" stroke-width="0.9"/><rect x="605.76" y="328.1" width="2.6" height="4.0" fill="#f00000"/><path d="M610.4 326.7V334.2" stroke="#9a9a9a" stroke-width="0.9"/><rect x="609.09" y="327.4" width="2.6" height="4.7" fill="#00e400"/><path d="M613.7 321.0V333.2" stroke="#9a9a9a" stroke-width="0.9"/><rect x="612.43" y="324.3" width="2.6" height="3.2" fill="#00e400"/><path d="M617.1 320.5V333.3" stroke="#9a9a9a" stroke-width="0.9"/><rect x="615.76" y="324.3" width="2.6" height="5.7" fill="#f00000"/><path d="M620.4 321.8V331.6" stroke="#9a9a9a" stroke-width="0.9"/><rect x="619.09" y="324.9" width="2.6" height="5.0" fill="#00e400"/><path d="M623.7 317.6V327.9" stroke="#9a9a9a" stroke-width="0.9"/><rect x="622.43" y="320.1" width="2.6" height="4.8" fill="#00e400"/><path d="M627.1 314.1V324.2" stroke="#9a9a9a" stroke-width="0.9"/><rect x="625.76" y="317.5" width="2.6" height="2.6" fill="#00e400"/><path d="M630.4 315.0V325.2" stroke="#9a9a9a" stroke-width="0.9"/><rect x="629.09" y="317.5" width="2.6" height="5.1" fill="#f00000"/><path d="M633.7 321.0V328.7" stroke="#9a9a9a" stroke-width="0.9"/><rect x="632.42" y="322.6" width="2.6" height="3.8" fill="#f00000"/><path d="M637.1 318.0V332.4" stroke="#9a9a9a" stroke-width="0.9"/><rect x="635.76" y="320.7" width="2.6" height="5.7" fill="#00e400"/><path d="M640.4 317.5V333.8" stroke="#9a9a9a" stroke-width="0.9"/><rect x="639.09" y="320.7" width="2.6" height="9.2" fill="#f00000"/><path d="M643.7 314.8V332.3" stroke="#9a9a9a" stroke-width="0.9"/><rect x="642.42" y="315.6" width="2.6" height="14.2" fill="#00e400"/><path d="M647.1 308.3V318.8" stroke="#9a9a9a" stroke-width="0.9"/><rect x="645.76" y="311.2" width="2.6" height="4.5" fill="#00e400"/><path d="M650.4 303.9V315.1" stroke="#9a9a9a" stroke-width="0.9"/><rect x="649.09" y="306.1" width="2.6" height="5.1" fill="#00e400"/><path d="M653.7 284.0V312.1" stroke="#9a9a9a" stroke-width="0.9"/><rect x="652.42" y="288.4" width="2.6" height="17.7" fill="#00e400"/><path d="M657.1 274.7V294.3" stroke="#9a9a9a" stroke-width="0.9"/><rect x="655.76" y="277.6" width="2.6" height="10.7" fill="#00e400"/><path d="M660.4 275.5V286.4" stroke="#9a9a9a" stroke-width="0.9"/><rect x="659.09" y="277.6" width="2.6" height="4.2" fill="#f00000"/><path d="M663.7 276.6V289.7" stroke="#9a9a9a" stroke-width="0.9"/><rect x="662.42" y="277.9" width="2.6" height="3.9" fill="#00e400"/><path d="M667.1 271.3V283.3" stroke="#9a9a9a" stroke-width="0.9"/><rect x="665.75" y="272.3" width="2.6" height="5.6" fill="#00e400"/><path d="M670.4 263.4V277.8" stroke="#9a9a9a" stroke-width="0.9"/><rect x="669.09" y="267.7" width="2.6" height="4.6" fill="#00e400"/><path d="M673.7 266.3V278.1" stroke="#9a9a9a" stroke-width="0.9"/><rect x="672.42" y="267.7" width="2.6" height="6.5" fill="#f00000"/><path d="M677.1 271.8V281.2" stroke="#9a9a9a" stroke-width="0.9"/><rect x="675.75" y="274.2" width="2.6" height="4.8" fill="#f00000"/><path d="M680.4 264.0V283.6" stroke="#9a9a9a" stroke-width="0.9"/><rect x="679.09" y="268.4" width="2.6" height="10.6" fill="#00e400"/><path d="M683.7 263.6V274.8" stroke="#9a9a9a" stroke-width="0.9"/><rect x="682.42" y="264.6" width="2.6" height="3.8" fill="#00e400"/><path d="M687.1 263.5V271.8" stroke="#9a9a9a" stroke-width="0.9"/><rect x="685.75" y="264.6" width="2.6" height="5.5" fill="#f00000"/><path d="M690.4 267.5V275.4" stroke="#9a9a9a" stroke-width="0.9"/><rect x="689.09" y="270.1" width="2.6" height="2.8" fill="#f00000"/><path d="M693.7 272.3V281.7" stroke="#9a9a9a" stroke-width="0.9"/><rect x="692.42" y="272.9" width="2.6" height="3.8" fill="#f00000"/><path d="M697.1 270.1V280.7" stroke="#9a9a9a" stroke-width="0.9"/><rect x="695.75" y="271.7" width="2.6" height="5.1" fill="#00e400"/><path d="M700.4 268.1V289.8" stroke="#9a9a9a" stroke-width="0.9"/><rect x="699.08" y="271.7" width="2.6" height="13.1" fill="#f00000"/><path d="M703.7 283.0V297.1" stroke="#9a9a9a" stroke-width="0.9"/><rect x="702.42" y="284.8" width="2.6" height="9.3" fill="#f00000"/><path d="M707.1 279.7V301.2" stroke="#9a9a9a" stroke-width="0.9"/><rect x="705.75" y="284.1" width="2.6" height="10.0" fill="#00e400"/><path d="M710.4 274.6V290.4" stroke="#9a9a9a" stroke-width="0.9"/><rect x="709.08" y="278.4" width="2.6" height="5.7" fill="#00e400"/><path d="M713.7 272.8V282.2" stroke="#9a9a9a" stroke-width="0.9"/><rect x="712.42" y="275.4" width="2.6" height="3.0" fill="#00e400"/><path d="M717.0 266.0V278.7" stroke="#9a9a9a" stroke-width="0.9"/><rect x="715.75" y="266.6" width="2.6" height="8.7" fill="#00e400"/><path d="M720.4 262.4V278.9" stroke="#9a9a9a" stroke-width="0.9"/><rect x="719.08" y="266.6" width="2.6" height="4.3" fill="#f00000"/><path d="M723.7 269.0V277.3" stroke="#9a9a9a" stroke-width="0.9"/><rect x="722.42" y="271.0" width="2.6" height="3.4" fill="#f00000"/><path d="M727.0 273.1V280.7" stroke="#9a9a9a" stroke-width="0.9"/><rect x="725.75" y="274.4" width="2.6" height="3.5" fill="#f00000"/><path d="M730.4 273.8V293.2" stroke="#9a9a9a" stroke-width="0.9"/><rect x="729.08" y="277.9" width="2.6" height="8.3" fill="#f00000"/><path d="M733.7 256.3V293.0" stroke="#9a9a9a" stroke-width="0.9"/><rect x="732.41" y="259.4" width="2.6" height="26.9" fill="#00e400"/><path d="M737.0 245.4V266.8" stroke="#9a9a9a" stroke-width="0.9"/><rect x="735.75" y="248.5" width="2.6" height="10.9" fill="#00e400"/><path d="M740.4 245.0V258.3" stroke="#9a9a9a" stroke-width="0.9"/><rect x="739.08" y="248.5" width="2.6" height="5.2" fill="#f00000"/><path d="M743.7 243.1V257.4" stroke="#9a9a9a" stroke-width="0.9"/><rect x="742.41" y="246.8" width="2.6" height="6.9" fill="#00e400"/><path d="M747.0 243.3V253.2" stroke="#9a9a9a" stroke-width="0.9"/><rect x="745.75" y="246.8" width="2.6" height="4.4" fill="#f00000"/><path d="M750.4 236.2V252.8" stroke="#9a9a9a" stroke-width="0.9"/><rect x="749.08" y="240.7" width="2.6" height="10.4" fill="#00e400"/><path d="M753.7 239.6V253.0" stroke="#9a9a9a" stroke-width="0.9"/><rect x="752.41" y="240.7" width="2.6" height="5.4" fill="#f00000"/><path d="M757.0 239.6V249.9" stroke="#9a9a9a" stroke-width="0.9"/><rect x="755.75" y="242.7" width="2.6" height="3.4" fill="#00e400"/><path d="M760.4 236.0V249.0" stroke="#9a9a9a" stroke-width="0.9"/><rect x="759.08" y="239.7" width="2.6" height="3.1" fill="#00e400"/><path d="M763.7 236.2V249.0" stroke="#9a9a9a" stroke-width="0.9"/><rect x="762.41" y="239.7" width="2.6" height="6.9" fill="#f00000"/><path d="M767.0 230.4V253.8" stroke="#9a9a9a" stroke-width="0.9"/><rect x="765.74" y="231.7" width="2.6" height="14.9" fill="#00e400"/><path d="M770.4 222.1V236.4" stroke="#9a9a9a" stroke-width="0.9"/><rect x="769.08" y="223.5" width="2.6" height="8.2" fill="#00e400"/><path d="M773.7 221.3V229.6" stroke="#9a9a9a" stroke-width="0.9"/><rect x="772.41" y="223.5" width="2.6" height="3.8" fill="#f00000"/><path d="M777.0 218.9V231.7" stroke="#9a9a9a" stroke-width="0.9"/><rect x="775.74" y="220.8" width="2.6" height="6.4" fill="#00e400"/><path d="M780.4 210.0V225.1" stroke="#9a9a9a" stroke-width="0.9"/><rect x="779.08" y="214.1" width="2.6" height="6.7" fill="#00e400"/><path d="M783.7 206.9V215.7" stroke="#9a9a9a" stroke-width="0.9"/><rect x="782.41" y="209.5" width="2.6" height="4.6" fill="#00e400"/><path d="M787.0 201.1V212.0" stroke="#9a9a9a" stroke-width="0.9"/><rect x="785.74" y="204.7" width="2.6" height="4.8" fill="#00e400"/><path d="M790.4 201.7V210.3" stroke="#9a9a9a" stroke-width="0.9"/><rect x="789.08" y="204.7" width="2.6" height="3.3" fill="#f00000"/><path d="M793.7 200.8V213.0" stroke="#9a9a9a" stroke-width="0.9"/><rect x="792.41" y="204.0" width="2.6" height="4.0" fill="#00e400"/><path d="M797.0 200.4V218.1" stroke="#9a9a9a" stroke-width="0.9"/><rect x="795.74" y="204.0" width="2.6" height="6.9" fill="#f00000"/><path d="M800.4 203.5V215.7" stroke="#9a9a9a" stroke-width="0.9"/><rect x="799.07" y="207.1" width="2.6" height="3.8" fill="#00e400"/><path d="M803.7 203.5V224.1" stroke="#9a9a9a" stroke-width="0.9"/><rect x="802.41" y="207.1" width="2.6" height="9.6" fill="#f00000"/><path d="M807.0 213.8V231.0" stroke="#9a9a9a" stroke-width="0.9"/><rect x="805.74" y="216.7" width="2.6" height="9.5" fill="#f00000"/><path d="M810.4 212.2V230.7" stroke="#9a9a9a" stroke-width="0.9"/><rect x="809.07" y="215.4" width="2.6" height="10.8" fill="#00e400"/><path d="M813.7 191.6V223.1" stroke="#9a9a9a" stroke-width="0.9"/><rect x="812.41" y="194.0" width="2.6" height="21.5" fill="#00e400"/><path d="M817.0 190.0V204.7" stroke="#9a9a9a" stroke-width="0.9"/><rect x="815.74" y="194.0" width="2.6" height="3.1" fill="#f00000"/><path d="M820.4 189.6V204.7" stroke="#9a9a9a" stroke-width="0.9"/><rect x="819.07" y="192.3" width="2.6" height="4.8" fill="#00e400"/><path d="M823.7 191.2V197.8" stroke="#9a9a9a" stroke-width="0.9"/><rect x="822.41" y="192.3" width="2.6" height="3.2" fill="#f00000"/><path d="M827.0 189.8V198.6" stroke="#9a9a9a" stroke-width="0.9"/><rect x="825.74" y="190.6" width="2.6" height="4.9" fill="#00e400"/><path d="M830.4 176.2V197.2" stroke="#9a9a9a" stroke-width="0.9"/><rect x="829.07" y="179.4" width="2.6" height="11.2" fill="#00e400"/><path d="M833.7 178.3V195.4" stroke="#9a9a9a" stroke-width="0.9"/><rect x="832.40" y="179.4" width="2.6" height="9.9" fill="#f00000"/><path d="M837.0 184.5V193.8" stroke="#9a9a9a" stroke-width="0.9"/><rect x="835.74" y="185.5" width="2.6" height="3.8" fill="#00e400"/><path d="M840.4 178.9V193.4" stroke="#9a9a9a" stroke-width="0.9"/><rect x="839.07" y="181.3" width="2.6" height="4.2" fill="#00e400"/><path d="M843.7 177.5V185.6" stroke="#9a9a9a" stroke-width="0.9"/><rect x="842.40" y="178.7" width="2.6" height="2.7" fill="#00e400"/><path d="M847.0 173.2V181.4" stroke="#9a9a9a" stroke-width="0.9"/><rect x="845.74" y="175.1" width="2.6" height="3.6" fill="#00e400"/><path d="M850.4 172.4V182.5" stroke="#9a9a9a" stroke-width="0.9"/><rect x="849.07" y="175.1" width="2.6" height="3.1" fill="#f00000"/><path d="M853.7 169.8V183.7" stroke="#9a9a9a" stroke-width="0.9"/><rect x="852.40" y="171.6" width="2.6" height="6.6" fill="#00e400"/><path d="M857.0 164.1V174.6" stroke="#9a9a9a" stroke-width="0.9"/><rect x="855.74" y="168.2" width="2.6" height="3.3" fill="#00e400"/><path d="M860.4 167.4V182.7" stroke="#9a9a9a" stroke-width="0.9"/><rect x="859.07" y="168.2" width="2.6" height="11.2" fill="#f00000"/><path d="M863.7 178.2V188.8" stroke="#9a9a9a" stroke-width="0.9"/><rect x="862.40" y="179.4" width="2.6" height="3.0" fill="#f00000"/><path d="M867.0 179.7V191.5" stroke="#9a9a9a" stroke-width="0.9"/><rect x="865.73" y="182.4" width="2.6" height="4.2" fill="#f00000"/><path d="M870.4 169.5V189.9" stroke="#9a9a9a" stroke-width="0.9"/><rect x="869.07" y="171.3" width="2.6" height="15.3" fill="#00e400"/><path d="M873.7 149.2V178.6" stroke="#9a9a9a" stroke-width="0.9"/><rect x="872.40" y="150.5" width="2.6" height="20.8" fill="#00e400"/><path d="M877.0 141.9V152.5" stroke="#9a9a9a" stroke-width="0.9"/><rect x="875.73" y="145.6" width="2.6" height="4.9" fill="#00e400"/><path d="M880.4 144.8V161.8" stroke="#9a9a9a" stroke-width="0.9"/><rect x="879.07" y="145.6" width="2.6" height="9.2" fill="#f00000"/><path d="M883.7 152.6V168.2" stroke="#9a9a9a" stroke-width="0.9"/><rect x="882.40" y="154.7" width="2.6" height="6.0" fill="#f00000"/><path d="M887.0 155.3V166.8" stroke="#9a9a9a" stroke-width="0.9"/><rect x="885.73" y="156.0" width="2.6" height="4.7" fill="#00e400"/><path d="M890.4 151.0V163.5" stroke="#9a9a9a" stroke-width="0.9"/><rect x="889.07" y="152.2" width="2.6" height="3.8" fill="#00e400"/><path d="M893.7 144.2V155.0" stroke="#9a9a9a" stroke-width="0.9"/><rect x="892.40" y="146.8" width="2.6" height="5.4" fill="#00e400"/><path d="M897.0 139.3V154.8" stroke="#9a9a9a" stroke-width="0.9"/><rect x="895.73" y="143.0" width="2.6" height="3.8" fill="#00e400"/><path d="M900.4 142.4V154.6" stroke="#9a9a9a" stroke-width="0.9"/><rect x="899.06" y="143.0" width="2.6" height="6.8" fill="#f00000"/><path d="M903.7 147.3V165.9" stroke="#9a9a9a" stroke-width="0.9"/><rect x="902.40" y="149.8" width="2.6" height="13.0" fill="#f00000"/><path d="M907.6 150V181" stroke="#9a9a9a" stroke-width="0.9"/><rect x="906.3" y="155" width="2.6" height="24" fill="#f00000"/><path d="M910.4 156V180" stroke="#9a9a9a" stroke-width="0.9"/><rect x="909.3" y="158" width="2.4" height="21" fill="#00e400"/><path d="M559.1 410.4l3.200-2.200v4.400z" fill="#f4f4f4"/><path d="M591.9 337.2l3.200-2.200v4.400z" fill="#f4f4f4"/><path d="M605.2 330.2l3.200-2.200v4.400z" fill="#f4f4f4"/><path d="M621.2 325.6l3.200-2.200v4.400z" fill="#f4f4f4"/><path d="M640.0 320.3l3.200-2.200v4.400z" fill="#f4f4f4"/><path d="M645.5 316.0l3.200-2.200v4.400z" fill="#f4f4f4"/><path d="M655.5 282.3l3.200-2.200v4.400z" fill="#f4f4f4"/><path d="M695.7 269.4l3.200-2.200v4.400z" fill="#f4f4f4"/><path d="M712.5 275.6l3.200-2.200v4.400z" fill="#f4f4f4"/><path d="M722.5 272.7l3.200-2.200v4.400z" fill="#f4f4f4"/><path d="M738.8 253.0l3.200-2.200v4.400z" fill="#f4f4f4"/><path d="M752.2 239.2l3.200-2.200v4.400z" fill="#f4f4f4"/><path d="M768.0 221.5l3.200-2.200v4.400z" fill="#f4f4f4"/><path d="M797.7 206.2l3.200-2.200v4.400z" fill="#f4f4f4"/><path d="M813.5 190.4l3.200-2.200v4.400z" fill="#f4f4f4"/><path d="M832.2 178.9l3.200-2.200v4.400z" fill="#f4f4f4"/><path d="M848.4 166.4l3.200-2.200v4.400z" fill="#f4f4f4"/><path d="M871.9 170.0l3.200-2.200v4.400z" fill="#f4f4f4"/><path d="M894.9 148.3l3.200-2.200v4.400z" fill="#f4f4f4"/><path d="M582.9 366.5l-3-2v4z" fill="#2a2aff"/><path d="M599.0 334.4l-3-2v4z" fill="#2a2aff"/><path d="M612.2 325.0l-3-2v4z" fill="#2a2aff"/><path d="M631.0 325.0l-3-2v4z" fill="#2a2aff"/><path d="M639.3 326.2l-3-2v4z" fill="#2a2aff"/><path d="M647.1 312.2l-3-2v4z" fill="#2a2aff"/><path d="M687.8 272.0l-3-2v4z" fill="#2a2aff"/><path d="M705.9 293.5l-3-2v4z" fill="#2a2aff"/><path d="M711.7 272.9l-3-2v4z" fill="#2a2aff"/><path d="M728.0 284.9l-3-2v4z" fill="#2a2aff"/><path d="M740.9 249.0l-3-2v4z" fill="#2a2aff"/><path d="M762.0 248.0l-3-2v4z" fill="#2a2aff"/><path d="M785.9 205.0l-3-2v4z" fill="#2a2aff"/><path d="M805.5 221.2l-3-2v4z" fill="#2a2aff"/><path d="M816.0 189.1l-3-2v4z" fill="#2a2aff"/><path d="M835.1 177.0l-3-2v4z" fill="#2a2aff"/><path d="M851.0 185.8l-3-2v4z" fill="#2a2aff"/><path d="M877.3 150.8l-3-2v4z" fill="#2a2aff"/><path d="M893.6 142.7l-3-2v4z" fill="#2a2aff"/><path d="M556.1 398.2h2.800v3h1.500l-2.900 3.400-2.900-3.400h1.500z" fill="#fff"/><text x="557.5" y="396.2" class="mk" textLength="6.600" lengthAdjust="spacingAndGlyphs">LX</text><text x="557.7" y="390.4" class="mk">1</text><path d="M588.9 325.0h2.800v3h1.500l-2.900 3.400-2.900-3.400h1.500z" fill="#fff"/><text x="590.3" y="323.0" class="mk" textLength="6.600" lengthAdjust="spacingAndGlyphs">LX</text><text x="590.5" y="317.2" class="mk">1</text><path d="M602.2 318.0h2.800v3h1.500l-2.900 3.400-2.900-3.400h1.500z" fill="#fff"/><text x="603.6" y="316.0" class="mk" textLength="6.600" lengthAdjust="spacingAndGlyphs">LX</text><text x="603.8" y="310.2" class="mk">1</text><path d="M618.2 313.4h2.800v3h1.500l-2.900 3.400-2.900-3.400h1.500z" fill="#fff"/><text x="619.6" y="311.4" class="mk" textLength="6.600" lengthAdjust="spacingAndGlyphs">LX</text><text x="619.8" y="305.6" class="mk">1</text><path d="M637.0 308.1h2.800v3h1.500l-2.900 3.400-2.900-3.400h1.500z" fill="#fff"/><text x="638.4" y="306.1" class="mk" textLength="6.600" lengthAdjust="spacingAndGlyphs">LX</text><text x="638.6" y="300.3" class="mk">1</text><path d="M642.5 303.8h2.800v3h1.500l-2.900 3.400-2.900-3.400h1.500z" fill="#fff"/><text x="643.9" y="301.8" class="mk" textLength="6.600" lengthAdjust="spacingAndGlyphs">LX</text><text x="644.1" y="296.0" class="mk">1</text><path d="M652.5 270.1h2.800v3h1.500l-2.900 3.400-2.900-3.400h1.500z" fill="#fff"/><text x="653.9" y="268.1" class="mk" textLength="6.600" lengthAdjust="spacingAndGlyphs">LX</text><text x="654.1" y="262.3" class="mk">1</text><path d="M692.7 257.2h2.800v3h1.500l-2.900 3.400-2.900-3.400h1.500z" fill="#fff"/><text x="694.1" y="255.2" class="mk" textLength="6.600" lengthAdjust="spacingAndGlyphs">LX</text><text x="694.3" y="249.4" class="mk">1</text><path d="M709.5 263.4h2.800v3h1.500l-2.900 3.400-2.900-3.400h1.500z" fill="#fff"/><text x="710.9" y="261.4" class="mk" textLength="6.600" lengthAdjust="spacingAndGlyphs">LX</text><text x="711.1" y="255.6" class="mk">1</text><path d="M719.5 260.5h2.800v3h1.500l-2.900 3.400-2.900-3.400h1.500z" fill="#fff"/><text x="720.9" y="258.5" class="mk" textLength="6.600" lengthAdjust="spacingAndGlyphs">LX</text><text x="721.1" y="252.7" class="mk">1</text><path d="M735.8 240.8h2.800v3h1.500l-2.900 3.400-2.900-3.400h1.500z" fill="#fff"/><text x="737.2" y="238.8" class="mk" textLength="6.600" lengthAdjust="spacingAndGlyphs">LX</text><text x="737.4" y="233.0" class="mk">1</text><path d="M749.2 227.0h2.800v3h1.500l-2.900 3.400-2.900-3.400h1.500z" fill="#fff"/><text x="750.6" y="225.0" class="mk" textLength="6.600" lengthAdjust="spacingAndGlyphs">LX</text><text x="750.8" y="219.2" class="mk">1</text><path d="M765.0 209.3h2.800v3h1.500l-2.900 3.400-2.900-3.400h1.500z" fill="#fff"/><text x="766.4" y="207.3" class="mk" textLength="6.600" lengthAdjust="spacingAndGlyphs">LX</text><text x="766.6" y="201.5" class="mk">1</text><path d="M794.7 194.0h2.800v3h1.500l-2.900 3.400-2.900-3.400h1.500z" fill="#fff"/><text x="796.1" y="192.0" class="mk" textLength="6.600" lengthAdjust="spacingAndGlyphs">LX</text><text x="796.3" y="186.2" class="mk">1</text><path d="M810.5 178.2h2.800v3h1.500l-2.900 3.400-2.900-3.400h1.500z" fill="#fff"/><text x="811.9" y="176.2" class="mk" textLength="6.600" lengthAdjust="spacingAndGlyphs">LX</text><text x="812.1" y="170.4" class="mk">1</text><path d="M829.2 166.7h2.800v3h1.500l-2.900 3.400-2.900-3.400h1.500z" fill="#fff"/><text x="830.6" y="164.7" class="mk" textLength="6.600" lengthAdjust="spacingAndGlyphs">LX</text><text x="830.8" y="158.9" class="mk">1</text><path d="M845.4 154.2h2.800v3h1.500l-2.900 3.400-2.900-3.400h1.500z" fill="#fff"/><text x="846.8" y="152.2" class="mk" textLength="6.600" lengthAdjust="spacingAndGlyphs">LX</text><text x="847.0" y="146.4" class="mk">1</text><path d="M868.9 157.8h2.800v3h1.500l-2.900 3.400-2.900-3.400h1.500z" fill="#fff"/><text x="870.3" y="155.8" class="mk" textLength="6.600" lengthAdjust="spacingAndGlyphs">LX</text><text x="870.5" y="150.0" class="mk">1</text><path d="M891.9 136.1h2.800v3h1.500l-2.900 3.400-2.900-3.400h1.500z" fill="#fff"/><text x="893.3" y="134.1" class="mk" textLength="6.600" lengthAdjust="spacingAndGlyphs">LX</text><text x="893.5" y="128.3" class="mk">1</text><path d="M583.1 378.7h2.800v-3h1.500l-2.900-3.400-2.900 3.400h1.500z" fill="#1414ff"/><text x="584.8" y="385.9" class="mk" textLength="6.600" lengthAdjust="spacingAndGlyphs">LE</text><text x="584.8" y="392.3" class="mk">1</text><path d="M599.2 346.6h2.800v-3h1.500l-2.900-3.400-2.900 3.400h1.500z" fill="#1414ff"/><text x="600.9" y="353.8" class="mk" textLength="6.600" lengthAdjust="spacingAndGlyphs">LE</text><text x="600.9" y="360.2" class="mk">1</text><path d="M612.4 337.2h2.800v-3h1.500l-2.900-3.400-2.900 3.400h1.500z" fill="#1414ff"/><text x="614.1" y="344.4" class="mk" textLength="6.600" lengthAdjust="spacingAndGlyphs">LE</text><text x="614.1" y="350.8" class="mk">1</text><path d="M631.2 337.2h2.800v-3h1.500l-2.900-3.400-2.900 3.400h1.500z" fill="#1414ff"/><text x="632.9" y="344.4" class="mk" textLength="6.600" lengthAdjust="spacingAndGlyphs">LE</text><text x="632.9" y="350.8" class="mk">1</text><path d="M639.5 338.4h2.800v-3h1.500l-2.900-3.400-2.900 3.400h1.500z" fill="#1414ff"/><text x="641.2" y="345.6" class="mk" textLength="6.600" lengthAdjust="spacingAndGlyphs">LE</text><text x="641.2" y="352.0" class="mk">1</text><path d="M647.3 324.4h2.800v-3h1.500l-2.900-3.400-2.900 3.400h1.500z" fill="#1414ff"/><text x="649.0" y="331.6" class="mk" textLength="6.600" lengthAdjust="spacingAndGlyphs">LE</text><text x="649.0" y="338.0" class="mk">1</text><path d="M688.0 284.2h2.800v-3h1.500l-2.900-3.400-2.900 3.400h1.500z" fill="#1414ff"/><text x="689.7" y="291.4" class="mk" textLength="6.600" lengthAdjust="spacingAndGlyphs">LE</text><text x="689.7" y="297.8" class="mk">1</text><path d="M706.1 305.7h2.800v-3h1.500l-2.900-3.400-2.900 3.400h1.500z" fill="#1414ff"/><text x="707.8" y="312.9" class="mk" textLength="6.600" lengthAdjust="spacingAndGlyphs">LE</text><text x="707.8" y="319.3" class="mk">1</text><path d="M711.9 285.1h2.800v-3h1.500l-2.900-3.400-2.900 3.400h1.500z" fill="#1414ff"/><text x="713.6" y="292.3" class="mk" textLength="6.600" lengthAdjust="spacingAndGlyphs">LE</text><text x="713.6" y="298.7" class="mk">1</text><path d="M728.2 297.1h2.800v-3h1.500l-2.900-3.400-2.900 3.400h1.500z" fill="#1414ff"/><text x="729.9" y="304.3" class="mk" textLength="6.600" lengthAdjust="spacingAndGlyphs">LE</text><text x="729.9" y="310.7" class="mk">1</text><path d="M741.1 261.2h2.800v-3h1.500l-2.900-3.400-2.900 3.400h1.500z" fill="#1414ff"/><text x="742.8" y="268.4" class="mk" textLength="6.600" lengthAdjust="spacingAndGlyphs">LE</text><text x="742.8" y="274.8" class="mk">1</text><path d="M762.2 260.2h2.800v-3h1.500l-2.900-3.400-2.900 3.400h1.500z" fill="#1414ff"/><text x="763.9" y="267.4" class="mk" textLength="6.600" lengthAdjust="spacingAndGlyphs">LE</text><text x="763.9" y="273.8" class="mk">1</text><path d="M786.1 217.2h2.800v-3h1.500l-2.900-3.400-2.900 3.400h1.500z" fill="#1414ff"/><text x="787.8" y="224.4" class="mk" textLength="6.600" lengthAdjust="spacingAndGlyphs">LE</text><text x="787.8" y="230.8" class="mk">1</text><path d="M805.7 233.4h2.800v-3h1.500l-2.900-3.400-2.900 3.400h1.500z" fill="#1414ff"/><text x="807.4" y="240.6" class="mk" textLength="6.600" lengthAdjust="spacingAndGlyphs">LE</text><text x="807.4" y="247.0" class="mk">1</text><path d="M816.2 201.3h2.800v-3h1.500l-2.900-3.400-2.900 3.400h1.500z" fill="#1414ff"/><text x="817.9" y="208.5" class="mk" textLength="6.600" lengthAdjust="spacingAndGlyphs">LE</text><text x="817.9" y="214.9" class="mk">1</text><path d="M835.3 189.2h2.800v-3h1.500l-2.900-3.400-2.900 3.400h1.500z" fill="#1414ff"/><text x="837.0" y="196.4" class="mk" textLength="6.600" lengthAdjust="spacingAndGlyphs">LE</text><text x="837.0" y="202.8" class="mk">1</text><path d="M851.2 198.0h2.800v-3h1.500l-2.900-3.400-2.900 3.400h1.500z" fill="#1414ff"/><text x="852.9" y="205.2" class="mk" textLength="6.600" lengthAdjust="spacingAndGlyphs">LE</text><text x="852.9" y="211.6" class="mk">1</text><path d="M877.5 163.0h2.800v-3h1.500l-2.900-3.400-2.900 3.400h1.500z" fill="#1414ff"/><text x="879.2" y="170.2" class="mk" textLength="6.600" lengthAdjust="spacingAndGlyphs">LE</text><text x="879.2" y="176.6" class="mk">1</text><path d="M893.8 154.9h2.800v-3h1.500l-2.900-3.400-2.900 3.400h1.500z" fill="#1414ff"/><text x="895.5" y="162.1" class="mk" textLength="6.600" lengthAdjust="spacingAndGlyphs">LE</text><text x="895.5" y="168.5" class="mk">1</text><text x="1004.900" y="465.9" class="pl" textLength="26.800" lengthAdjust="spacingAndGlyphs">4,200.00</text><text x="1004.900" y="451.7" class="pl" textLength="26.800" lengthAdjust="spacingAndGlyphs">4,250.00</text><text x="1004.900" y="437.5" class="pl" textLength="26.800" lengthAdjust="spacingAndGlyphs">4,300.00</text><text x="1004.900" y="423.3" class="pl" textLength="26.800" lengthAdjust="spacingAndGlyphs">4,350.00</text><text x="1004.900" y="409.1" class="pl" textLength="26.800" lengthAdjust="spacingAndGlyphs">4,400.00</text><text x="1004.900" y="394.9" class="pl" textLength="26.800" lengthAdjust="spacingAndGlyphs">4,450.00</text><text x="1004.900" y="380.7" class="pl" textLength="26.800" lengthAdjust="spacingAndGlyphs">4,500.00</text><text x="1004.900" y="366.5" class="pl" textLength="26.800" lengthAdjust="spacingAndGlyphs">4,550.00</text><text x="1004.900" y="352.3" class="pl" textLength="26.800" lengthAdjust="spacingAndGlyphs">4,600.00</text><text x="1004.900" y="338.1" class="pl" textLength="26.800" lengthAdjust="spacingAndGlyphs">4,650.00</text><text x="1004.900" y="323.9" class="pl" textLength="26.800" lengthAdjust="spacingAndGlyphs">4,700.00</text><text x="1004.900" y="309.7" class="pl" textLength="26.800" lengthAdjust="spacingAndGlyphs">4,750.00</text><text x="1004.900" y="295.5" class="pl" textLength="26.800" lengthAdjust="spacingAndGlyphs">4,800.00</text><text x="1004.900" y="281.3" class="pl" textLength="26.800" lengthAdjust="spacingAndGlyphs">4,850.00</text><text x="1004.900" y="267.1" class="pl" textLength="26.800" lengthAdjust="spacingAndGlyphs">4,900.00</text><text x="1004.900" y="252.9" class="pl" textLength="26.800" lengthAdjust="spacingAndGlyphs">4,950.00</text><text x="1004.900" y="238.7" class="pl" textLength="26.800" lengthAdjust="spacingAndGlyphs">5,000.00</text><text x="1004.900" y="224.5" class="pl" textLength="26.800" lengthAdjust="spacingAndGlyphs">5,050.00</text><text x="1004.900" y="210.3" class="pl" textLength="26.800" lengthAdjust="spacingAndGlyphs">5,100.00</text><text x="1004.900" y="196.1" class="pl" textLength="26.800" lengthAdjust="spacingAndGlyphs">5,150.00</text><text x="1004.900" y="181.9" class="pl" textLength="26.800" lengthAdjust="spacingAndGlyphs">5,200.00</text><text x="1004.900" y="153.5" class="pl" textLength="26.800" lengthAdjust="spacingAndGlyphs">5,300.00</text><text x="1004.900" y="139.3" class="pl" textLength="26.800" lengthAdjust="spacingAndGlyphs">5,350.00</text><path d="M1002.2 163.6l3.2-3.6h19v7.2h-19z" fill="#00e800"/><text x="1006.3" y="166.2" class="pl" style="fill:#0a4a0a;font-weight:normal" textLength="26" lengthAdjust="spacingAndGlyphs">5,255.00</text><path d="M1015.400 126.300l3-2.700h1v1.500h2.400v2.400h-2.400v1.500h-1z" fill="#2eaa62"/><path d="M1022.300 125.100h2v2.400h-2z" fill="#e8664d"/><path d="M1015 123.800l4.500-3.500 3 1.800h2" stroke="#445" stroke-width="0.7" fill="none"/><text x="556.4" y="479.300" class="ml">Nov</text><text x="626.3" y="479.300" class="ml">Dec</text><text x="693.3" y="479.300" class="ml">2024</text><text x="763.3" y="479.300" class="ml">Feb</text><text x="830.3" y="479.300" class="ml">Mar</text><text x="896.8" y="479.300" class="ml">Apr</text><text x="959.3" y="479.300" class="ml">May</text><rect x="125" y="111.2" width="20.80000000000001" height="8.6" rx="0.8" fill="#787878" stroke="#cccccc" stroke-width="0.7"/><text x="127" y="118.100" class="st" fill="#dcdcdc" textLength="10.2" lengthAdjust="spacingAndGlyphs">SA</text><path d="M139.2 111.2v8.6" stroke="#c8c8c8" stroke-width="0.6"/><path d="M140.6 114.2h4l-2 2.600z" fill="#fff"/><rect x="149.6" y="111.2" width="35.70000000000002" height="8.6" rx="0.8" fill="#787878" stroke="#cccccc" stroke-width="0.7"/><text x="151.3" y="118.100" class="st" fill="#dcdcdc" textLength="32.3" lengthAdjust="spacingAndGlyphs">OPTIMIZE</text><rect x="189.1" y="111.2" width="12.599999999999994" height="8.6" rx="0.8" fill="#787878" stroke="#cccccc" stroke-width="0.7"/><text x="190.9" y="118.100" class="st" fill="#dcdcdc" textLength="9" lengthAdjust="spacingAndGlyphs">VP</text><text x="206" y="118.100" class="st" fill="#8e8e8e" textLength="16" lengthAdjust="spacingAndGlyphs">@ES</text><rect x="226.3" y="111.6" width="7.899999999999977" height="7.800" rx="0.8" fill="#000" stroke="#e0e0e0" stroke-width="0.8"/><path d="M228.300 114.3h3.800l-1.900 2.500z" fill="#fff"/><rect x="238" y="111.6" width="10" height="7.800" rx="0.8" fill="#000" stroke="#e0e0e0" stroke-width="0.8"/><path d="M240.300 113.200v4.800" stroke="#fff" stroke-width="0.9"/><path d="M242.300 114.300h3.800l-1.900 2.500z" fill="#fff"/><text x="251.5" y="118.100" class="st" fill="#8e8e8e" textLength="13.0" lengthAdjust="spacingAndGlyphs">@es</text><text x="269.5" y="118.100" class="st" fill="#8e8e8e" textLength="17.5" lengthAdjust="spacingAndGlyphs">1 Day</text><rect x="291.5" y="111.6" width="8.0" height="7.800" rx="0.8" fill="#000" stroke="#e0e0e0" stroke-width="0.8"/><path d="M293.600 114.300h3.800l-1.900 2.500z" fill="#fff"/><rect x="303.3" y="111.6" width="12.5" height="7.800" rx="0.8" fill="#000" stroke="#e0e0e0" stroke-width="0.8"/><text x="304.500" y="118.200" class="st" fill="#fff" style="font-size:7px">R</text><path d="M310.600 114.300h3.800l-1.900 2.500z" fill="#fff"/><text x="319.3" y="118.100" class="st" fill="#8e8e8e" textLength="16.69999999999999" lengthAdjust="spacingAndGlyphs">Trade</text><text x="340.3" y="118.100" class="st" fill="#8e8e8e" textLength="15.0" lengthAdjust="spacingAndGlyphs">CME</text><text x="359.7" y="118.100" class="st" fill="#8e8e8e" textLength="45.60000000000002" lengthAdjust="spacingAndGlyphs">ASCII Mapping</text><text x="409.3" y="118.100" class="st" fill="#8e8e8e" textLength="23.0" lengthAdjust="spacingAndGlyphs">Futures</text><text x="436.6" y="118.100" class="st" fill="#fff" textLength="12.399999999999977" lengthAdjust="spacingAndGlyphs">V=0</text><text x="453.5" y="118.100" class="st" fill="#fff" textLength="84.79999999999995" lengthAdjust="spacingAndGlyphs">Blog Losing Days (6,  1,  5)</text></svg>
<div class="a" style="left:4.5px;top:144.7px;width:545px;height:395.5px;background:#f0f0f0;border-radius:4px 4px 0 0;box-shadow:0 0 0.8px 0.4px rgba(60,60,60,0.55),1px 2px 8px rgba(0,0,0,0.28);overflow:hidden;"><div class="a" style="left:0;top:0;width:545px;height:20.3px;background:#e9f5e2;"></div><div class="a" style="left:0;top:20.3px;width:545px;height:22px;background:#ffffff;"></div><div class="a" style="left:0;top:42.300px;width:545px;height:0.8px;background:#d0d0d0;"></div></div>
<span class="t" style="left:9.40px;top:149.30px;font-size:8.7px;line-height:11px;color:#2a2a2a;letter-spacing:-0.457px;">@ES : Blog Losing Days Backtesting Strategy Performance Report</span>
<svg class="a" style="left:460px;top:146.7px;" width="90" height="18" viewBox="0 0 90 18"><path d="M8 7.800h6.500" stroke="#333" stroke-width="0.8"/><rect x="39.300" y="4.500" width="5.800" height="5.800" rx="0.700" fill="none" stroke="#333" stroke-width="0.8"/><path d="M70.500 4.500l6.200 6.200m0-6.200l-6.200 6.200" stroke="#333" stroke-width="0.8"/></svg>
<svg class="a" style="left:0;top:165px" width="560" height="23" viewBox="0 165 560 23"><path d="M12.600 175.900l3.400-2.800v1.600h1.500v2.400h-1.500v1.600z" fill="#a8a8a8"/><path d="M18.700 174.600v2.600" stroke="#a8a8a8" stroke-width="0.9"/><path d="M30.200 175h3.800l-1.900 2.300z" fill="#666"/><path d="M49.900 175.900l-3.400-2.800v1.600h-1.700v2.400h1.700v1.600z" fill="#4472c4"/><path d="M43.600 174.600v2.600" stroke="#4472c4" stroke-width="0.9"/><path d="M61.200 175h4.200l-2.100 2.500z" fill="#111"/><path d="M68.500 167.500v17" stroke="#c8c8c8" stroke-width="0.9"/><path d="M76.600 170.300h9.600l1.600 1.600v10h-11.200z" fill="#fff" stroke="#4472c4" stroke-width="1.200"/><rect x="78.500" y="178.300" width="7.400" height="3.600" fill="#4472c4"/><rect x="80" y="179.300" width="1.600" height="2" fill="#fff"/><path d="M100.500 171.500h6.500l2.500 2.500v7h-9z" fill="#fff" stroke="#777" stroke-width="0.8"/><path d="M97.300 174h5.500v5h-5.500z" fill="#fff" stroke="#777" stroke-width="0.8"/><path d="M97.300 176.500h5.500" stroke="#777" stroke-width="0.7"/><rect x="120.500" y="170.800" width="7.500" height="4" fill="#fff" stroke="#888" stroke-width="0.7"/><rect x="118.300" y="174.300" width="12" height="5.600" rx="1.200" fill="#fff" stroke="#777" stroke-width="0.8"/><rect x="120.500" y="177.800" width="7.500" height="4" fill="#dfe8f5" stroke="#3c66a8" stroke-width="0.7"/><path d="M150.13 175.02L150.13 176.78L148.78 176.90L148.27 178.15L149.13 179.19L147.89 180.43L146.85 179.57L145.60 180.08L145.48 181.43L143.72 181.43L143.60 180.08L142.35 179.57L141.31 180.43L140.07 179.19L140.93 178.15L140.42 176.90L139.07 176.78L139.07 175.02L140.42 174.90L140.93 173.65L140.07 172.61L141.31 171.37L142.35 172.23L143.60 171.72L143.72 170.37L145.48 170.37L145.60 171.72L146.85 172.23L147.89 171.37L149.13 172.61L148.27 173.65L148.78 174.90Z" fill="#fff" stroke="#777" stroke-width="0.7" stroke-linejoin="round"/><circle cx="144.600" cy="175.900" r="2" fill="none" stroke="#777" stroke-width="0.7"/><path d="M156.600 167.500v17" stroke="#c8c8c8" stroke-width="0.9"/><rect x="160" y="166.300" width="20.400" height="19.300" rx="1" fill="#cce4f7" stroke="#a5cff3" stroke-width="0.6"/><path d="M164.400 180h12.200M174.200 170.600v11.600" stroke="#6f98d8" stroke-width="0.8"/><path d="M186.500 176.500l1.300 3.600c.4 1 1 1.600 2 1.600h2.400c1 0 1.800-.8 1.800-1.800v-5.800M187.800 178v-5.800M189.800 176v-5.500M191.900 176v-5M186.500 176.500l1.300 1.500" fill="none" stroke="#3c66a8" stroke-width="0.8" stroke-linecap="round"/><circle cx="211.500" cy="174.200" r="3.500" fill="none" stroke="#e8553d" stroke-width="0.8"/><path d="M214 176.800l3.100 3" stroke="#e8553d" stroke-width="1.200"/><path d="M209.800 174.200h3.400M211.500 172.500v3.400" stroke="#e8553d" stroke-width="0.700"/><circle cx="232" cy="174.200" r="3.300" fill="none" stroke="#b4b4b4" stroke-width="0.8"/><path d="M234.400 176.700l3.200 3" stroke="#b4b4b4" stroke-width="1.100"/><path d="M230.400 174.200h3.200" stroke="#b4b4b4" stroke-width="0.700"/><rect x="246.500" y="170.200" width="14" height="9" fill="#fcfcfc" stroke="#bdbdbd" stroke-width="0.7"/><path d="M247.500 181h12.500" stroke="#c8c8c8" stroke-width="0.9"/><text x="250.500" y="176.800" font-size="5" fill="#b8b8b8" font-family="Liberation Sans">1:1</text><path d="M265.200 167.500v17" stroke="#c8c8c8" stroke-width="0.9"/><path d="M272 177c2-3 5-5 12-6.500v9c-4 .3-8 1-12 -2.500z" fill="#e4efe6" stroke="#999" stroke-width="0.500"/><path d="M272 177c3-1 7-3 12-3.500M272.500 178.500c4-1 7-2 11.500-2M273 175.500c3-2 6-3.500 11-4" fill="none" stroke="#7fbf95" stroke-width="0.500"/><path d="M273 179.500c3 .8 7 1 11 .3" fill="none" stroke="#888" stroke-width="0.500"/><path d="M291.300 167.500v17" stroke="#c8c8c8" stroke-width="0.9"/></svg>
<div class="a" style="left:5.3px;top:188.3px;width:103.2px;height:351.7px;background:#ffffff;border:0.8px solid #b4b4b4;box-sizing:border-box;overflow:hidden;"></div>
<div class="a" style="left:6px;top:528.6px;width:101.8px;height:10.8px;background:#f0f0f0;"></div>
<div class="a" style="left:16.5px;top:532.4px;width:42.5px;height:3px;background:#8a8a8a;"></div>
<svg class="a" style="left:0;top:188px" width="109" height="352" viewBox="0 188 109 352"><path d="M12 198.3V384.4H18.500" fill="none" stroke="#a8a8a8" stroke-width="0.6"/><path d="M22.4 200.3V349.0" fill="none" stroke="#a8a8a8" stroke-width="0.6"/><rect x="9.600" y="192.8" width="5" height="5" fill="#fff" stroke="#8a9ab0" stroke-width="0.600"/><path d="M10.800 195.3h2.600" stroke="#445" stroke-width="0.600"/><path d="M22.4 207.1h4.600" stroke="#a8a8a8" stroke-width="0.600"/><rect x="29.500" y="203.6" width="6.900" height="7" fill="#fdf1ee" stroke="#a9a9a9" stroke-width="0.500"/><path d="M29.800 205.2h6.300M29.800 206.9h6.300M29.800 208.6h6.300" stroke="#e8705a" stroke-width="0.800"/><path d="M31.800 204.1v6M34.100 204.1v6" stroke="#f6c4ba" stroke-width="0.400"/><path d="M22.4 218.9h4.600" stroke="#a8a8a8" stroke-width="0.600"/><rect x="29.500" y="215.4" width="6.900" height="7" fill="#fdf1ee" stroke="#a9a9a9" stroke-width="0.500"/><path d="M29.800 217.0h6.300M29.800 218.7h6.300M29.800 220.4h6.300" stroke="#e8705a" stroke-width="0.800"/><path d="M31.800 215.9v6M34.100 215.9v6" stroke="#f6c4ba" stroke-width="0.400"/><path d="M22.4 230.8h4.600" stroke="#a8a8a8" stroke-width="0.600"/><rect x="29.500" y="227.3" width="6.900" height="7" fill="#fdf1ee" stroke="#a9a9a9" stroke-width="0.500"/><path d="M29.800 228.9h6.300M29.800 230.6h6.300M29.800 232.3h6.300" stroke="#e8705a" stroke-width="0.800"/><path d="M31.800 227.8v6M34.100 227.8v6" stroke="#f6c4ba" stroke-width="0.400"/><path d="M22.4 242.6h4.600" stroke="#a8a8a8" stroke-width="0.600"/><rect x="29.500" y="239.1" width="6.900" height="7" fill="#fff" stroke="#999" stroke-width="0.600"/><path d="M30.500 243.8l1.600-1.800 1.500 1.200 2-2.200" fill="none" stroke="#e0553d" stroke-width="0.700"/><path d="M22.4 254.4h4.600" stroke="#a8a8a8" stroke-width="0.600"/><rect x="29.500" y="250.9" width="6.900" height="7" fill="#fff" stroke="#999" stroke-width="0.600"/><path d="M30.500 255.6l1.600-1.800 1.500 1.200 2-2.200" fill="none" stroke="#e0553d" stroke-width="0.700"/><path d="M22.4 266.2h4.600" stroke="#a8a8a8" stroke-width="0.600"/><rect x="29.500" y="262.7" width="6.900" height="7" fill="#fff" stroke="#999" stroke-width="0.600"/><path d="M30.500 267.4l1.600-1.800 1.500 1.200 2-2.200" fill="none" stroke="#e0553d" stroke-width="0.700"/><path d="M22.4 278.0h4.600" stroke="#a8a8a8" stroke-width="0.600"/><rect x="29.500" y="274.5" width="6.900" height="7" fill="#fff" stroke="#999" stroke-width="0.600"/><path d="M30.500 279.2l1.600-1.800 1.500 1.200 2-2.200" fill="none" stroke="#e0553d" stroke-width="0.700"/><path d="M22.4 289.9h4.600" stroke="#a8a8a8" stroke-width="0.600"/><rect x="29.500" y="286.4" width="6.900" height="7" fill="#fff" stroke="#999" stroke-width="0.600"/><path d="M30.500 291.1l1.600-1.800 1.500 1.200 2-2.200" fill="none" stroke="#e0553d" stroke-width="0.700"/><path d="M22.4 301.7h4.600" stroke="#a8a8a8" stroke-width="0.600"/><rect x="29.500" y="298.2" width="6.900" height="7" fill="#fff" stroke="#999" stroke-width="0.600"/><path d="M30.500 302.9l1.600-1.800 1.500 1.200 2-2.200" fill="none" stroke="#e0553d" stroke-width="0.700"/><path d="M22.4 313.5h4.600" stroke="#a8a8a8" stroke-width="0.600"/><rect x="29.500" y="310.0" width="6.900" height="7" fill="#fff" stroke="#999" stroke-width="0.600"/><path d="M30.500 314.7l1.600-1.800 1.500 1.200 2-2.200" fill="none" stroke="#e0553d" stroke-width="0.700"/><path d="M22.4 325.3h4.600" stroke="#a8a8a8" stroke-width="0.600"/><rect x="29.500" y="321.8" width="6.900" height="7" fill="#fff" stroke="#999" stroke-width="0.600"/><path d="M30.500 326.5l1.600-1.800 1.500 1.200 2-2.200" fill="none" stroke="#e0553d" stroke-width="0.700"/><path d="M22.4 337.1h4.600" stroke="#a8a8a8" stroke-width="0.600"/><rect x="29.500" y="333.6" width="6.900" height="7" fill="#fff" stroke="#999" stroke-width="0.600"/><path d="M30.500 338.3l1.600-1.800 1.500 1.200 2-2.200" fill="none" stroke="#e0553d" stroke-width="0.700"/><path d="M22.4 349.0h4.600" stroke="#a8a8a8" stroke-width="0.600"/><rect x="29.500" y="345.5" width="6.900" height="7" fill="#fff" stroke="#999" stroke-width="0.600"/><path d="M30.500 350.2l1.600-1.800 1.500 1.200 2-2.200" fill="none" stroke="#e0553d" stroke-width="0.700"/><rect x="9.600" y="358.3" width="5" height="5" fill="#fff" stroke="#8a9ab0" stroke-width="0.600"/><path d="M10.800 360.8h2.600" stroke="#445" stroke-width="0.600"/><path d="M12.100 359.5v2.600" stroke="#445" stroke-width="0.600"/><rect x="9.600" y="370.1" width="5" height="5" fill="#fff" stroke="#8a9ab0" stroke-width="0.600"/><path d="M10.800 372.6h2.600" stroke="#445" stroke-width="0.600"/><path d="M12.100 371.3v2.600" stroke="#445" stroke-width="0.600"/><rect x="19.600" y="380.9" width="7" height="7" fill="#fff" stroke="#c8a39a" stroke-width="0.600"/><path d="M22 381.1v6.600M24.300 381.1v6.600M19.600 383.3h7M19.600 385.5h7" stroke="#e0705a" stroke-width="0.500"/></svg>
<div class="a" style="left:38.6px;top:307.6px;width:69.7px;height:11.6px;background:#e6e6e6;"></div>
<span class="t" style="left:18.30px;top:190.10px;font-size:8.3px;line-height:10px;color:#1f1f1f;letter-spacing:-0.240px;max-width:90.0px;overflow:hidden;">Strategy Analysis</span>
<span class="t" style="left:39.50px;top:201.92px;font-size:8.3px;line-height:10px;color:#1f1f1f;letter-spacing:-0.238px;max-width:68.8px;overflow:hidden;">Strategy Performance Summary</span>
<span class="t" style="left:39.50px;top:213.74px;font-size:8.3px;line-height:10px;color:#1f1f1f;letter-spacing:-0.282px;max-width:68.8px;overflow:hidden;">Performance Ratios</span>
<span class="t" style="left:39.50px;top:225.56px;font-size:8.3px;line-height:10px;color:#1f1f1f;letter-spacing:-0.255px;max-width:68.8px;overflow:hidden;">Time Analysis</span>
<span class="t" style="left:39.50px;top:237.38px;font-size:8.3px;line-height:10px;color:#1f1f1f;letter-spacing:-0.240px;max-width:68.8px;overflow:hidden;">Equity Curve Detailed</span>
<span class="t" style="left:39.50px;top:249.20px;font-size:8.3px;line-height:10px;color:#1f1f1f;letter-spacing:-0.240px;max-width:68.8px;overflow:hidden;">Equity Curve Detailed with Drawdown</span>
<span class="t" style="left:39.50px;top:261.02px;font-size:8.3px;line-height:10px;color:#1f1f1f;letter-spacing:-0.240px;max-width:68.8px;overflow:hidden;">Equity Curve Detailed Long</span>
<span class="t" style="left:39.50px;top:272.84px;font-size:8.3px;line-height:10px;color:#1f1f1f;letter-spacing:-0.240px;max-width:68.8px;overflow:hidden;">Equity Curve Detailed Short</span>
<span class="t" style="left:39.50px;top:284.66px;font-size:8.3px;line-height:10px;color:#1f1f1f;letter-spacing:-0.194px;max-width:68.8px;overflow:hidden;">Equity Run-up &amp; Drawdown</span>
<span class="t" style="left:39.50px;top:296.48px;font-size:8.3px;line-height:10px;color:#1f1f1f;letter-spacing:-0.194px;max-width:68.8px;overflow:hidden;">Equity Run-up &amp; Drawdown %</span>
<span class="t" style="left:39.50px;top:308.30px;font-size:8.3px;line-height:10px;color:#1f1f1f;letter-spacing:-0.356px;max-width:68.8px;overflow:hidden;">Equity Curve Close To Close</span>
<span class="t" style="left:39.50px;top:320.12px;font-size:8.3px;line-height:10px;color:#1f1f1f;letter-spacing:-0.356px;max-width:68.8px;overflow:hidden;">Equity Curve Close To Close %</span>
<span class="t" style="left:39.50px;top:331.94px;font-size:8.3px;line-height:10px;color:#1f1f1f;letter-spacing:-0.178px;max-width:68.8px;overflow:hidden;">Buy &amp; Hold Return</span>
<span class="t" style="left:39.50px;top:343.76px;font-size:8.3px;line-height:10px;color:#1f1f1f;letter-spacing:-0.033px;max-width:68.8px;overflow:hidden;">Value Added Monthly Index</span>
<span class="t" style="left:18.30px;top:355.58px;font-size:8.3px;line-height:10px;color:#1f1f1f;letter-spacing:-0.298px;max-width:90.0px;overflow:hidden;">Trade Analysis</span>
<span class="t" style="left:18.30px;top:367.40px;font-size:8.3px;line-height:10px;color:#1f1f1f;letter-spacing:-0.178px;max-width:90.0px;overflow:hidden;">Periodical Analysis</span>
<span class="t" style="left:28.90px;top:379.22px;font-size:8.3px;line-height:10px;color:#1f1f1f;letter-spacing:-0.332px;max-width:79.4px;overflow:hidden;">Settings</span>
<div class="a" style="left:114.6px;top:188.3px;width:434.9px;height:351.7px;background:#ffffff;border:0.8px solid #9a9a9a;border-right:none;border-bottom:none;box-sizing:border-box;"></div>
<div class="a" style="left:115.4px;top:188.7px;width:434.1px;height:21.3px;background:#b4b4b4;"></div>
<span class="t" style="left:118.60px;top:195.00px;font-size:10.5px;line-height:13px;color:#ffffff;font-weight:bold;letter-spacing:-0.087px;">Equity Curve Close To Close</span>
<svg class="a" style="left:115px;top:211px" width="433" height="329" viewBox="115 211 433 329"><path d="M173 468.0H538" stroke="#666" stroke-width="0.650" stroke-dasharray="1.900 1.400"/><path d="M169.5 468.0h3.500" stroke="#707070" stroke-width="0.800"/><path d="M173 426.9H538" stroke="#666" stroke-width="0.650" stroke-dasharray="1.900 1.400"/><path d="M169.5 426.9h3.500" stroke="#707070" stroke-width="0.800"/><path d="M173 385.8H538" stroke="#666" stroke-width="0.650" stroke-dasharray="1.900 1.400"/><path d="M169.5 385.8h3.500" stroke="#707070" stroke-width="0.800"/><path d="M173 344.7H538" stroke="#666" stroke-width="0.650" stroke-dasharray="1.900 1.400"/><path d="M169.5 344.7h3.500" stroke="#707070" stroke-width="0.800"/><path d="M173 303.6H538" stroke="#666" stroke-width="0.650" stroke-dasharray="1.900 1.400"/><path d="M169.5 303.6h3.500" stroke="#707070" stroke-width="0.800"/><path d="M173 262.5H538" stroke="#666" stroke-width="0.650" stroke-dasharray="1.900 1.400"/><path d="M169.5 262.5h3.500" stroke="#707070" stroke-width="0.800"/><path d="M170.5 221.700H538" stroke="#666" stroke-width="0.650" stroke-dasharray="1.900 1.400"/><path d="M173 488.300H538" stroke="#222" stroke-width="0.800" stroke-dasharray="1.500 1.300"/><path d="M222.7 221.700V493" stroke="#666" stroke-width="0.650" stroke-dasharray="1.900 1.400"/><path d="M272.3 221.700V493" stroke="#666" stroke-width="0.650" stroke-dasharray="1.900 1.400"/><path d="M321.9 221.700V493" stroke="#666" stroke-width="0.650" stroke-dasharray="1.900 1.400"/><path d="M371.6 221.700V493" stroke="#666" stroke-width="0.650" stroke-dasharray="1.900 1.400"/><path d="M421.2 221.700V493" stroke="#666" stroke-width="0.650" stroke-dasharray="1.900 1.400"/><path d="M470.9 221.700V493" stroke="#666" stroke-width="0.650" stroke-dasharray="1.900 1.400"/><path d="M520.5 221.700V493" stroke="#666" stroke-width="0.650" stroke-dasharray="1.900 1.400"/><path d="M173 220V489.300" stroke="#808080" stroke-width="1.300"/><path d="M172.4 488.800H538" stroke="#808080" stroke-width="1.100"/><circle cx="173.4" cy="488.2" r="1.950" fill="#00ee00"/><circle cx="174.4" cy="482.4" r="1.950" fill="#00ee00"/><circle cx="175.4" cy="481.9" r="1.950" fill="#00ee00"/><circle cx="176.4" cy="481.2" r="1.950" fill="#00ee00"/><circle cx="177.3" cy="480.2" r="1.950" fill="#00ee00"/><circle cx="178.3" cy="479.1" r="1.950" fill="#00ee00"/><circle cx="179.3" cy="476.5" r="1.950" fill="#00ee00"/><circle cx="180.3" cy="476.0" r="1.950" fill="#00ee00"/><circle cx="181.3" cy="475.5" r="1.950" fill="#00ee00"/><circle cx="182.3" cy="475.6" r="1.950" fill="#00ee00"/><circle cx="184.3" cy="474.7" r="1.950" fill="#00ee00"/><circle cx="185.3" cy="472.3" r="1.950" fill="#00ee00"/><circle cx="186.3" cy="470.4" r="1.950" fill="#00ee00"/><circle cx="187.2" cy="469.9" r="1.950" fill="#00ee00"/><circle cx="188.2" cy="469.4" r="1.950" fill="#00ee00"/><circle cx="189.2" cy="468.7" r="1.950" fill="#00ee00"/><circle cx="190.2" cy="468.0" r="1.950" fill="#00ee00"/><circle cx="191.2" cy="467.0" r="1.950" fill="#00ee00"/><circle cx="192.2" cy="466.0" r="1.950" fill="#00ee00"/><circle cx="193.2" cy="465.2" r="1.950" fill="#00ee00"/><circle cx="194.2" cy="464.4" r="1.950" fill="#00ee00"/><circle cx="195.2" cy="463.6" r="1.950" fill="#00ee00"/><circle cx="196.2" cy="463.0" r="1.950" fill="#00ee00"/><circle cx="197.1" cy="462.3" r="1.950" fill="#00ee00"/><circle cx="198.1" cy="461.7" r="1.950" fill="#00ee00"/><circle cx="212.0" cy="460.9" r="1.950" fill="#00ee00"/><circle cx="248.6" cy="453.8" r="1.950" fill="#00ee00"/><circle cx="249.6" cy="453.6" r="1.950" fill="#00ee00"/><circle cx="254.6" cy="453.2" r="1.950" fill="#00ee00"/><circle cx="255.6" cy="451.4" r="1.950" fill="#00ee00"/><circle cx="260.5" cy="451.0" r="1.950" fill="#00ee00"/><circle cx="261.5" cy="449.7" r="1.950" fill="#00ee00"/><circle cx="262.5" cy="449.3" r="1.950" fill="#00ee00"/><circle cx="272.4" cy="449.2" r="1.950" fill="#00ee00"/><circle cx="273.4" cy="447.7" r="1.950" fill="#00ee00"/><circle cx="274.4" cy="445.9" r="1.950" fill="#00ee00"/><circle cx="275.4" cy="444.0" r="1.950" fill="#00ee00"/><circle cx="276.3" cy="443.0" r="1.950" fill="#00ee00"/><circle cx="277.3" cy="442.1" r="1.950" fill="#00ee00"/><circle cx="278.3" cy="441.6" r="1.950" fill="#00ee00"/><circle cx="279.3" cy="441.2" r="1.950" fill="#00ee00"/><circle cx="280.3" cy="440.9" r="1.950" fill="#00ee00"/><circle cx="281.3" cy="440.5" r="1.950" fill="#00ee00"/><circle cx="282.3" cy="440.1" r="1.950" fill="#00ee00"/><circle cx="283.3" cy="439.6" r="1.950" fill="#00ee00"/><circle cx="284.3" cy="439.1" r="1.950" fill="#00ee00"/><circle cx="285.3" cy="438.5" r="1.950" fill="#00ee00"/><circle cx="286.2" cy="437.8" r="1.950" fill="#00ee00"/><circle cx="287.2" cy="437.1" r="1.950" fill="#00ee00"/><circle cx="288.2" cy="436.2" r="1.950" fill="#00ee00"/><circle cx="289.2" cy="435.1" r="1.950" fill="#00ee00"/><circle cx="290.2" cy="434.1" r="1.950" fill="#00ee00"/><circle cx="351.6" cy="433.0" r="1.950" fill="#00ee00"/><circle cx="352.6" cy="431.0" r="1.950" fill="#00ee00"/><circle cx="353.6" cy="429.6" r="1.950" fill="#00ee00"/><circle cx="354.6" cy="428.2" r="1.950" fill="#00ee00"/><circle cx="355.5" cy="427.4" r="1.950" fill="#00ee00"/><circle cx="356.5" cy="426.8" r="1.950" fill="#00ee00"/><circle cx="357.5" cy="426.2" r="1.950" fill="#00ee00"/><circle cx="358.5" cy="425.9" r="1.950" fill="#00ee00"/><circle cx="359.5" cy="425.6" r="1.950" fill="#00ee00"/><circle cx="360.5" cy="425.3" r="1.950" fill="#00ee00"/><circle cx="361.5" cy="425.1" r="1.950" fill="#00ee00"/><circle cx="362.5" cy="424.7" r="1.950" fill="#00ee00"/><circle cx="363.5" cy="423.9" r="1.950" fill="#00ee00"/><circle cx="364.5" cy="423.1" r="1.950" fill="#00ee00"/><circle cx="365.4" cy="421.6" r="1.950" fill="#00ee00"/><circle cx="366.4" cy="418.7" r="1.950" fill="#00ee00"/><circle cx="367.4" cy="415.4" r="1.950" fill="#00ee00"/><circle cx="368.4" cy="411.4" r="1.950" fill="#00ee00"/><circle cx="369.4" cy="406.3" r="1.950" fill="#00ee00"/><circle cx="370.4" cy="405.4" r="1.950" fill="#00ee00"/><circle cx="407.0" cy="404.7" r="1.950" fill="#00ee00"/><circle cx="408.0" cy="398.0" r="1.950" fill="#00ee00"/><circle cx="409.0" cy="395.4" r="1.950" fill="#00ee00"/><circle cx="410.0" cy="394.3" r="1.950" fill="#00ee00"/><circle cx="411.0" cy="393.8" r="1.950" fill="#00ee00"/><circle cx="412.0" cy="392.9" r="1.950" fill="#00ee00"/><circle cx="413.0" cy="391.7" r="1.950" fill="#00ee00"/><circle cx="414.0" cy="390.4" r="1.950" fill="#00ee00"/><circle cx="414.9" cy="388.7" r="1.950" fill="#00ee00"/><circle cx="415.9" cy="386.9" r="1.950" fill="#00ee00"/><circle cx="416.9" cy="386.2" r="1.950" fill="#00ee00"/><circle cx="417.9" cy="385.8" r="1.950" fill="#00ee00"/><circle cx="418.9" cy="385.2" r="1.950" fill="#00ee00"/><circle cx="419.9" cy="384.5" r="1.950" fill="#00ee00"/><circle cx="420.9" cy="383.8" r="1.950" fill="#00ee00"/><circle cx="421.9" cy="382.5" r="1.950" fill="#00ee00"/><circle cx="422.9" cy="381.0" r="1.950" fill="#00ee00"/><circle cx="423.9" cy="379.9" r="1.950" fill="#00ee00"/><circle cx="424.8" cy="379.4" r="1.950" fill="#00ee00"/><circle cx="447.6" cy="377.0" r="1.950" fill="#00ee00"/><circle cx="448.6" cy="374.5" r="1.950" fill="#00ee00"/><circle cx="449.6" cy="373.2" r="1.950" fill="#00ee00"/><circle cx="450.6" cy="371.9" r="1.950" fill="#00ee00"/><circle cx="451.6" cy="370.7" r="1.950" fill="#00ee00"/><circle cx="452.6" cy="369.9" r="1.950" fill="#00ee00"/><circle cx="453.6" cy="369.2" r="1.950" fill="#00ee00"/><circle cx="454.5" cy="368.5" r="1.950" fill="#00ee00"/><circle cx="455.5" cy="367.8" r="1.950" fill="#00ee00"/><circle cx="464.4" cy="365.1" r="1.950" fill="#00ee00"/><circle cx="465.4" cy="361.4" r="1.950" fill="#00ee00"/><circle cx="468.4" cy="358.2" r="1.950" fill="#00ee00"/><circle cx="469.4" cy="353.9" r="1.950" fill="#00ee00"/><circle cx="470.4" cy="353.0" r="1.950" fill="#00ee00"/><circle cx="474.3" cy="347.4" r="1.950" fill="#00ee00"/><circle cx="475.3" cy="344.1" r="1.950" fill="#00ee00"/><circle cx="479.3" cy="327.0" r="1.950" fill="#00ee00"/><circle cx="486.2" cy="322.4" r="1.950" fill="#00ee00"/><circle cx="487.2" cy="318.7" r="1.950" fill="#00ee00"/><circle cx="488.2" cy="311.0" r="1.950" fill="#00ee00"/><circle cx="489.2" cy="307.2" r="1.950" fill="#00ee00"/><circle cx="490.2" cy="305.2" r="1.950" fill="#00ee00"/><circle cx="491.2" cy="303.8" r="1.950" fill="#00ee00"/><circle cx="492.2" cy="303.4" r="1.950" fill="#00ee00"/><circle cx="494.1" cy="303.0" r="1.950" fill="#00ee00"/><circle cx="495.1" cy="299.6" r="1.950" fill="#00ee00"/><circle cx="496.1" cy="297.2" r="1.950" fill="#00ee00"/><circle cx="497.1" cy="294.8" r="1.950" fill="#00ee00"/><circle cx="498.1" cy="292.7" r="1.950" fill="#00ee00"/><circle cx="499.1" cy="290.6" r="1.950" fill="#00ee00"/><circle cx="500.1" cy="288.6" r="1.950" fill="#00ee00"/><circle cx="501.1" cy="286.7" r="1.950" fill="#00ee00"/><circle cx="502.1" cy="284.9" r="1.950" fill="#00ee00"/><circle cx="503.1" cy="283.1" r="1.950" fill="#00ee00"/><circle cx="504.0" cy="281.6" r="1.950" fill="#00ee00"/><circle cx="505.0" cy="280.1" r="1.950" fill="#00ee00"/><circle cx="506.0" cy="278.1" r="1.950" fill="#00ee00"/><circle cx="507.0" cy="272.4" r="1.950" fill="#00ee00"/><circle cx="508.0" cy="269.0" r="1.950" fill="#00ee00"/><circle cx="509.0" cy="267.4" r="1.950" fill="#00ee00"/><circle cx="510.0" cy="265.2" r="1.950" fill="#00ee00"/><circle cx="511.0" cy="261.5" r="1.950" fill="#00ee00"/><circle cx="522.9" cy="258.0" r="1.950" fill="#00ee00"/><circle cx="523.8" cy="257.0" r="1.950" fill="#00ee00"/><circle cx="524.8" cy="255.9" r="1.950" fill="#00ee00"/><circle cx="525.8" cy="254.7" r="1.950" fill="#00ee00"/><circle cx="526.8" cy="252.0" r="1.950" fill="#00ee00"/><circle cx="527.8" cy="249.1" r="1.950" fill="#00ee00"/><circle cx="528.8" cy="247.0" r="1.950" fill="#00ee00"/><circle cx="529.8" cy="245.0" r="1.950" fill="#00ee00"/><circle cx="530.8" cy="240.3" r="1.950" fill="#00ee00"/><circle cx="531.8" cy="235.3" r="1.950" fill="#00ee00"/><circle cx="532.8" cy="232.3" r="1.950" fill="#00ee00"/><circle cx="533.7" cy="229.3" r="1.950" fill="#00ee00"/><circle cx="534.7" cy="227.3" r="1.950" fill="#00ee00"/><circle cx="535.7" cy="225.4" r="1.950" fill="#00ee00"/><circle cx="536.7" cy="223.4" r="1.950" fill="#00ee00"/><path d="M173.4 488.2 L173.8 482.6 L176.0 481.5 L178.2 479.3 L179.3 476.5 L181.6 475.4 L183.8 476.0 L186.0 470.5 L188.2 469.4 L190.4 467.9 L192.6 465.7 L194.8 463.9 L198.1 461.7 L199.9 466.1 L202.1 463.4 L203.6 477.1 L205.8 473.8 L209.2 469.4 L212.5 459.5 L214.7 468.3 L215.8 471.6 L216.9 477.1 L218.0 488.2 L219.7 488.6 L221.3 482.6 L224.6 479.3 L227.9 474.9 L230.1 468.3 L231.2 470.5 L233.9 465.0 L235.6 470.5 L237.8 471.2 L241.2 469.4 L243.4 468.3 L245.6 470.1 L247.3 468.3 L247.8 454.0 L250.0 453.5 L251.1 455.1 L254.4 454.0 L255.1 451.1 L256.6 452.2 L259.9 451.7 L262.1 448.9 L264.3 451.7 L266.5 450.4 L269.9 450.0 L272.3 449.3 L273.6 447.3 L275.4 444.0 L277.6 441.8 L280.9 440.7 L284.2 439.2 L287.5 437.0 L290.8 433.4 L291.9 438.5 L293.0 447.3 L295.2 435.2 L297.0 446.2 L299.2 451.7 L301.4 445.6 L303.3 446.1 L306.2 447.6 L308.3 443.2 L310.6 441.7 L312.1 440.2 L314.2 438.7 L315.1 449.0 L316.5 453.5 L318.0 450.5 L319.5 460.8 L320.9 475.0 L322.4 457.9 L324.8 450.5 L326.8 446.1 L328.9 441.7 L331.3 443.2 L333.6 437.3 L335.7 434.9 L338.6 435.8 L340.7 437.8 L343.1 437.3 L346.0 438.1 L348.9 435.8 L351.0 434.9 L351.9 432.0 L354.8 427.8 L357.8 426.1 L362.2 424.9 L365.2 422.5 L366.6 418.1 L368.1 413.1 L369.6 405.4 L371.3 405.4 L371.9 478.5 L373.4 463.8 L374.9 449.0 L376.4 453.5 L378.4 450.5 L381.4 446.1 L384.3 440.2 L387.3 434.3 L388.7 416.6 L390.2 419.6 L391.1 415.2 L392.3 428.4 L393.7 433.7 L396.1 426.9 L399.0 422.5 L401.4 418.1 L403.5 408.4 L405.5 410.7 L407.0 404.8 L407.9 398.4 L409.4 394.5 L411.4 393.6 L413.8 390.7 L416.1 386.6 L418.2 385.7 L421.2 383.6 L422.6 381.3 L424.7 378.9 L427.4 387.9 L430.1 382.1 L431.3 391.7 L434.0 380.9 L436.3 380.1 L437.8 385.9 L439.0 383.2 L440.9 391.7 L442.9 393.7 L445.6 398.3 L447.1 378.2 L448.7 374.3 L451.8 370.5 L454.5 368.5 L455.6 367.8 L457.2 401.4 L458.7 403.3 L460.3 403.3 L462.2 376.3 L464.1 366.6 L465.3 360.8 L467.2 368.5 L468.8 355.0 L470.3 352.3 L471.9 368.5 L473.0 358.9 L474.6 345.3 L475.7 343.4 L476.9 358.9 L478.1 335.7 L479.6 324.8 L481.2 349.2 L482.7 343.4 L484.2 333.7 L485.8 324.1 L487.3 318.3 L488.5 308.6 L490.4 304.7 L492.0 302.8 L493.1 306.7 L495.1 299.7 L497.0 295.1 L499.7 289.3 L502.8 283.5 L505.9 278.8 L507.4 269.9 L509.8 266.1 L511.3 260.3 L513.6 268.0 L514.8 262.2 L516.3 279.6 L517.9 283.5 L519.4 273.8 L520.6 275.7 L522.5 258.3 L524.5 256.4 L526.0 254.5 L527.9 248.7 L529.9 244.8 L531.8 235.1 L533.7 229.3 L535.7 225.5 L537.6 221.6" fill="none" stroke="#2a2a2a" stroke-width="0.800" stroke-linejoin="round"/><circle cx="173.4" cy="488.2" r="1.950" fill="#00ee00"/><circle cx="174.4" cy="482.4" r="1.950" fill="#00ee00"/><circle cx="175.4" cy="481.9" r="1.950" fill="#00ee00"/><circle cx="176.4" cy="481.2" r="1.950" fill="#00ee00"/><circle cx="177.3" cy="480.2" r="1.950" fill="#00ee00"/><circle cx="178.3" cy="479.1" r="1.950" fill="#00ee00"/><circle cx="179.3" cy="476.5" r="1.950" fill="#00ee00"/><circle cx="180.3" cy="476.0" r="1.950" fill="#00ee00"/><circle cx="181.3" cy="475.5" r="1.950" fill="#00ee00"/><circle cx="182.3" cy="475.6" r="1.950" fill="#00ee00"/><circle cx="184.3" cy="474.7" r="1.950" fill="#00ee00"/><circle cx="185.3" cy="472.3" r="1.950" fill="#00ee00"/><circle cx="186.3" cy="470.4" r="1.950" fill="#00ee00"/><circle cx="187.2" cy="469.9" r="1.950" fill="#00ee00"/><circle cx="188.2" cy="469.4" r="1.950" fill="#00ee00"/><circle cx="189.2" cy="468.7" r="1.950" fill="#00ee00"/><circle cx="190.2" cy="468.0" r="1.950" fill="#00ee00"/><circle cx="191.2" cy="467.0" r="1.950" fill="#00ee00"/><circle cx="192.2" cy="466.0" r="1.950" fill="#00ee00"/><circle cx="193.2" cy="465.2" r="1.950" fill="#00ee00"/><circle cx="194.2" cy="464.4" r="1.950" fill="#00ee00"/><circle cx="195.2" cy="463.6" r="1.950" fill="#00ee00"/><circle cx="196.2" cy="463.0" r="1.950" fill="#00ee00"/><circle cx="197.1" cy="462.3" r="1.950" fill="#00ee00"/><circle cx="198.1" cy="461.7" r="1.950" fill="#00ee00"/><circle cx="212.0" cy="460.9" r="1.950" fill="#00ee00"/><circle cx="248.6" cy="453.8" r="1.950" fill="#00ee00"/><circle cx="249.6" cy="453.6" r="1.950" fill="#00ee00"/><circle cx="254.6" cy="453.2" r="1.950" fill="#00ee00"/><circle cx="255.6" cy="451.4" r="1.950" fill="#00ee00"/><circle cx="260.5" cy="451.0" r="1.950" fill="#00ee00"/><circle cx="261.5" cy="449.7" r="1.950" fill="#00ee00"/><circle cx="262.5" cy="449.3" r="1.950" fill="#00ee00"/><circle cx="272.4" cy="449.2" r="1.950" fill="#00ee00"/><circle cx="273.4" cy="447.7" r="1.950" fill="#00ee00"/><circle cx="274.4" cy="445.9" r="1.950" fill="#00ee00"/><circle cx="275.4" cy="444.0" r="1.950" fill="#00ee00"/><circle cx="276.3" cy="443.0" r="1.950" fill="#00ee00"/><circle cx="277.3" cy="442.1" r="1.950" fill="#00ee00"/><circle cx="278.3" cy="441.6" r="1.950" fill="#00ee00"/><circle cx="279.3" cy="441.2" r="1.950" fill="#00ee00"/><circle cx="280.3" cy="440.9" r="1.950" fill="#00ee00"/><circle cx="281.3" cy="440.5" r="1.950" fill="#00ee00"/><circle cx="282.3" cy="440.1" r="1.950" fill="#00ee00"/><circle cx="283.3" cy="439.6" r="1.950" fill="#00ee00"/><circle cx="284.3" cy="439.1" r="1.950" fill="#00ee00"/><circle cx="285.3" cy="438.5" r="1.950" fill="#00ee00"/><circle cx="286.2" cy="437.8" r="1.950" fill="#00ee00"/><circle cx="287.2" cy="437.1" r="1.950" fill="#00ee00"/><circle cx="288.2" cy="436.2" r="1.950" fill="#00ee00"/><circle cx="289.2" cy="435.1" r="1.950" fill="#00ee00"/><circle cx="290.2" cy="434.1" r="1.950" fill="#00ee00"/><circle cx="351.6" cy="433.0" r="1.950" fill="#00ee00"/><circle cx="352.6" cy="431.0" r="1.950" fill="#00ee00"/><circle cx="353.6" cy="429.6" r="1.950" fill="#00ee00"/><circle cx="354.6" cy="428.2" r="1.950" fill="#00ee00"/><circle cx="355.5" cy="427.4" r="1.950" fill="#00ee00"/><circle cx="356.5" cy="426.8" r="1.950" fill="#00ee00"/><circle cx="357.5" cy="426.2" r="1.950" fill="#00ee00"/><circle cx="358.5" cy="425.9" r="1.950" fill="#00ee00"/><circle cx="359.5" cy="425.6" r="1.950" fill="#00ee00"/><circle cx="360.5" cy="425.3" r="1.950" fill="#00ee00"/><circle cx="361.5" cy="425.1" r="1.950" fill="#00ee00"/><circle cx="362.5" cy="424.7" r="1.950" fill="#00ee00"/><circle cx="363.5" cy="423.9" r="1.950" fill="#00ee00"/><circle cx="364.5" cy="423.1" r="1.950" fill="#00ee00"/><circle cx="365.4" cy="421.6" r="1.950" fill="#00ee00"/><circle cx="366.4" cy="418.7" r="1.950" fill="#00ee00"/><circle cx="367.4" cy="415.4" r="1.950" fill="#00ee00"/><circle cx="368.4" cy="411.4" r="1.950" fill="#00ee00"/><circle cx="369.4" cy="406.3" r="1.950" fill="#00ee00"/><circle cx="370.4" cy="405.4" r="1.950" fill="#00ee00"/><circle cx="407.0" cy="404.7" r="1.950" fill="#00ee00"/><circle cx="408.0" cy="398.0" r="1.950" fill="#00ee00"/><circle cx="409.0" cy="395.4" r="1.950" fill="#00ee00"/><circle cx="410.0" cy="394.3" r="1.950" fill="#00ee00"/><circle cx="411.0" cy="393.8" r="1.950" fill="#00ee00"/><circle cx="412.0" cy="392.9" r="1.950" fill="#00ee00"/><circle cx="413.0" cy="391.7" r="1.950" fill="#00ee00"/><circle cx="414.0" cy="390.4" r="1.950" fill="#00ee00"/><circle cx="414.9" cy="388.7" r="1.950" fill="#00ee00"/><circle cx="415.9" cy="386.9" r="1.950" fill="#00ee00"/><circle cx="416.9" cy="386.2" r="1.950" fill="#00ee00"/><circle cx="417.9" cy="385.8" r="1.950" fill="#00ee00"/><circle cx="418.9" cy="385.2" r="1.950" fill="#00ee00"/><circle cx="419.9" cy="384.5" r="1.950" fill="#00ee00"/><circle cx="420.9" cy="383.8" r="1.950" fill="#00ee00"/><circle cx="421.9" cy="382.5" r="1.950" fill="#00ee00"/><circle cx="422.9" cy="381.0" r="1.950" fill="#00ee00"/><circle cx="423.9" cy="379.9" r="1.950" fill="#00ee00"/><circle cx="424.8" cy="379.4" r="1.950" fill="#00ee00"/><circle cx="447.6" cy="377.0" r="1.950" fill="#00ee00"/><circle cx="448.6" cy="374.5" r="1.950" fill="#00ee00"/><circle cx="449.6" cy="373.2" r="1.950" fill="#00ee00"/><circle cx="450.6" cy="371.9" r="1.950" fill="#00ee00"/><circle cx="451.6" cy="370.7" r="1.950" fill="#00ee00"/><circle cx="452.6" cy="369.9" r="1.950" fill="#00ee00"/><circle cx="453.6" cy="369.2" r="1.950" fill="#00ee00"/><circle cx="454.5" cy="368.5" r="1.950" fill="#00ee00"/><circle cx="455.5" cy="367.8" r="1.950" fill="#00ee00"/><circle cx="464.4" cy="365.1" r="1.950" fill="#00ee00"/><circle cx="465.4" cy="361.4" r="1.950" fill="#00ee00"/><circle cx="468.4" cy="358.2" r="1.950" fill="#00ee00"/><circle cx="469.4" cy="353.9" r="1.950" fill="#00ee00"/><circle cx="470.4" cy="353.0" r="1.950" fill="#00ee00"/><circle cx="474.3" cy="347.4" r="1.950" fill="#00ee00"/><circle cx="475.3" cy="344.1" r="1.950" fill="#00ee00"/><circle cx="479.3" cy="327.0" r="1.950" fill="#00ee00"/><circle cx="486.2" cy="322.4" r="1.950" fill="#00ee00"/><circle cx="487.2" cy="318.7" r="1.950" fill="#00ee00"/><circle cx="488.2" cy="311.0" r="1.950" fill="#00ee00"/><circle cx="489.2" cy="307.2" r="1.950" fill="#00ee00"/><circle cx="490.2" cy="305.2" r="1.950" fill="#00ee00"/><circle cx="491.2" cy="303.8" r="1.950" fill="#00ee00"/><circle cx="492.2" cy="303.4" r="1.950" fill="#00ee00"/><circle cx="494.1" cy="303.0" r="1.950" fill="#00ee00"/><circle cx="495.1" cy="299.6" r="1.950" fill="#00ee00"/><circle cx="496.1" cy="297.2" r="1.950" fill="#00ee00"/><circle cx="497.1" cy="294.8" r="1.950" fill="#00ee00"/><circle cx="498.1" cy="292.7" r="1.950" fill="#00ee00"/><circle cx="499.1" cy="290.6" r="1.950" fill="#00ee00"/><circle cx="500.1" cy="288.6" r="1.950" fill="#00ee00"/><circle cx="501.1" cy="286.7" r="1.950" fill="#00ee00"/><circle cx="502.1" cy="284.9" r="1.950" fill="#00ee00"/><circle cx="503.1" cy="283.1" r="1.950" fill="#00ee00"/><circle cx="504.0" cy="281.6" r="1.950" fill="#00ee00"/><circle cx="505.0" cy="280.1" r="1.950" fill="#00ee00"/><circle cx="506.0" cy="278.1" r="1.950" fill="#00ee00"/><circle cx="507.0" cy="272.4" r="1.950" fill="#00ee00"/><circle cx="508.0" cy="269.0" r="1.950" fill="#00ee00"/><circle cx="509.0" cy="267.4" r="1.950" fill="#00ee00"/><circle cx="510.0" cy="265.2" r="1.950" fill="#00ee00"/><circle cx="511.0" cy="261.5" r="1.950" fill="#00ee00"/><circle cx="522.9" cy="258.0" r="1.950" fill="#00ee00"/><circle cx="523.8" cy="257.0" r="1.950" fill="#00ee00"/><circle cx="524.8" cy="255.9" r="1.950" fill="#00ee00"/><circle cx="525.8" cy="254.7" r="1.950" fill="#00ee00"/><circle cx="526.8" cy="252.0" r="1.950" fill="#00ee00"/><circle cx="527.8" cy="249.1" r="1.950" fill="#00ee00"/><circle cx="528.8" cy="247.0" r="1.950" fill="#00ee00"/><circle cx="529.8" cy="245.0" r="1.950" fill="#00ee00"/><circle cx="530.8" cy="240.3" r="1.950" fill="#00ee00"/><circle cx="531.8" cy="235.3" r="1.950" fill="#00ee00"/><circle cx="532.8" cy="232.3" r="1.950" fill="#00ee00"/><circle cx="533.7" cy="229.3" r="1.950" fill="#00ee00"/><circle cx="534.7" cy="227.3" r="1.950" fill="#00ee00"/><circle cx="535.7" cy="225.4" r="1.950" fill="#00ee00"/><circle cx="536.7" cy="223.4" r="1.950" fill="#00ee00"/><path d="M286 530h14" stroke="#404040" stroke-width="0.700"/><circle cx="353.600" cy="530" r="2" fill="#00ee00"/></svg>
<span class="t" style="left:142.60px;top:460.70px;font-size:8.3px;line-height:10px;color:#333;letter-spacing:-0.297px;">20,000</span>
<span class="t" style="left:142.60px;top:419.60px;font-size:8.3px;line-height:10px;color:#333;letter-spacing:-0.297px;">40,000</span>
<span class="t" style="left:142.60px;top:378.50px;font-size:8.3px;line-height:10px;color:#333;letter-spacing:-0.297px;">60,000</span>
<span class="t" style="left:142.60px;top:337.40px;font-size:8.3px;line-height:10px;color:#333;letter-spacing:-0.297px;">80,000</span>
<span class="t" style="left:138.60px;top:296.30px;font-size:8.3px;line-height:10px;color:#333;letter-spacing:-0.343px;">100,000</span>
<span class="t" style="left:138.60px;top:255.20px;font-size:8.3px;line-height:10px;color:#333;letter-spacing:-0.343px;">120,000</span>
<span class="t" style="left:218.40px;top:497.60px;font-size:8.3px;line-height:10px;color:#333;letter-spacing:-0.666px;">50</span>
<span class="t" style="left:266.10px;top:497.60px;font-size:8.3px;line-height:10px;color:#333;letter-spacing:-0.682px;">100</span>
<span class="t" style="left:315.75px;top:497.60px;font-size:8.3px;line-height:10px;color:#333;letter-spacing:-0.682px;">150</span>
<span class="t" style="left:365.40px;top:497.60px;font-size:8.3px;line-height:10px;color:#333;letter-spacing:-0.682px;">200</span>
<span class="t" style="left:415.05px;top:497.60px;font-size:8.3px;line-height:10px;color:#333;letter-spacing:-0.682px;">250</span>
<span class="t" style="left:464.70px;top:497.60px;font-size:8.3px;line-height:10px;color:#333;letter-spacing:-0.682px;">300</span>
<span class="t" style="left:514.35px;top:497.60px;font-size:8.3px;line-height:10px;color:#333;letter-spacing:-0.682px;">350</span>
<span class="t" style="left:302.45px;top:511.50px;font-size:8.4px;line-height:11px;color:#333;letter-spacing:-0.261px;">Trade Number</span>
<span class="t" style="left:301.00px;top:524.30px;font-size:8.4px;line-height:11px;color:#333;letter-spacing:-0.101px;">Net Profit</span>
<span class="t" style="left:361.50px;top:524.30px;font-size:8.4px;line-height:11px;color:#333;letter-spacing:-0.669px;">Peaks</span>
<span class="t" style="left:110.800px;top:348.800px;width:40px;height:12px;line-height:12px;font-size:8.600px;letter-spacing:0.1px;color:#333;transform:rotate(-90deg);text-align:center;">Equity ()</span>
</body></html>
